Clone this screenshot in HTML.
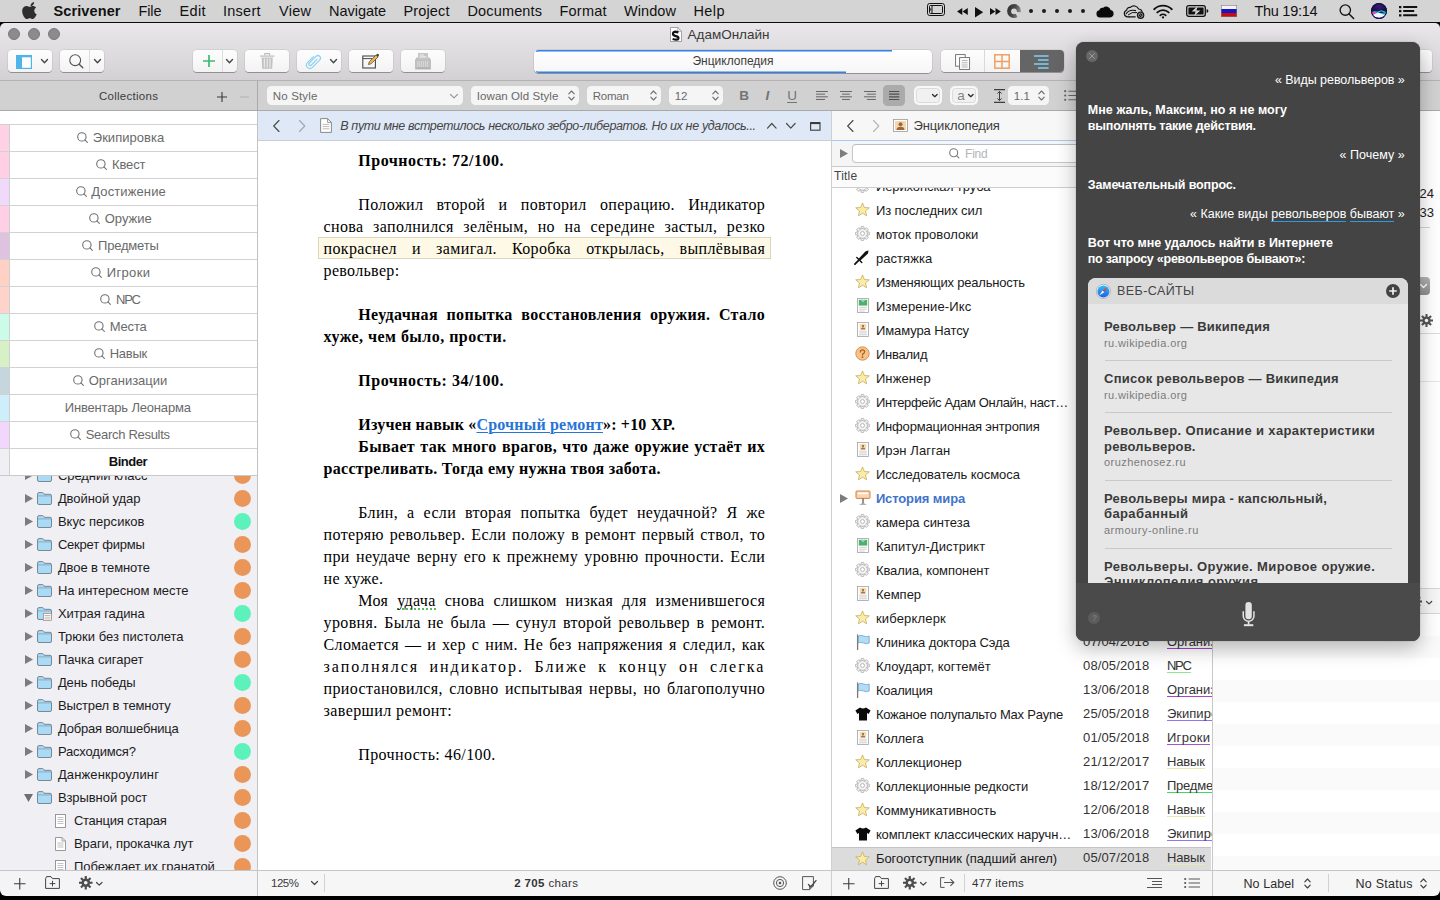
<!DOCTYPE html>
<html lang="ru"><head><meta charset="utf-8"><title>АдамОнлайн — Scrivener</title>
<style>
*{box-sizing:border-box;margin:0;padding:0}
html,body{width:1440px;height:900px;overflow:hidden;background:#000}
body{position:relative;font-family:"Liberation Sans","DejaVu Sans",sans-serif;font-size:13px;color:#222;-webkit-font-smoothing:antialiased}
.abs{position:absolute}
svg{position:absolute;overflow:visible}
/* menu bar */
#menubar{position:absolute;left:0;top:0;width:1440px;height:23px;background:#d4d4d4;border-bottom:1px solid #0c0c0c}
#menubar span{position:absolute;top:0;line-height:22px;font-size:14.5px;color:#111;white-space:nowrap}
/* window */
#win{position:absolute;left:0;top:0;width:1440px;height:900px}
#titlebar{position:absolute;left:0;top:23px;width:1440px;height:58px;border-radius:5px 5px 0 0;background:linear-gradient(#e9e7e9,#d3d1d3);border-bottom:1px solid #b4b2b4}
.tl{position:absolute;top:5px;width:12px;height:12px;border-radius:6px;background:#8b8a8c;border:0.5px solid #7a797b}
#title{position:absolute;left:688px;top:3px;font-size:13.5px;color:#3c3c3c;line-height:16px;white-space:nowrap}
.tb{position:absolute;top:50px;height:22px;background:linear-gradient(#fdfdfd,#f3f3f3);border-radius:4px;box-shadow:0 0 0 0.5px rgba(0,0,0,.12),0 1px 0.5px rgba(0,0,0,.28)}
.tb .div{position:absolute;top:0;width:1px;height:22px;background:#dcdcdc}
/* format bar */
#fmt{position:absolute;left:0;top:81px;width:1440px;height:30px;background:#d1d1d1;border-bottom:1px solid #a9a9a9}
.fc{position:absolute;top:5px;height:19px;background:#f5f5f5;border-radius:4.5px;font-size:12px;line-height:19px;color:#6b6b6b;padding-left:6px;white-space:nowrap}
/* sidebar */
#side{position:absolute;left:0;top:111px;width:258px;height:759px;background:#f0eff4;border-right:1px solid #c3c3c5;overflow:hidden}
.coll{position:absolute;left:0;width:257px;height:27px;border-top:1px solid #d2d2d2;background:#fff;text-align:center;font-size:13px;line-height:26px;color:#6c6c6c;padding-left:10px;white-space:nowrap}
.coll i{position:absolute;left:0;top:0;width:10px;height:100%;border-right:1px solid #cfcfcf}
.brow{position:absolute;left:0;width:257px;height:23px;font-size:13px;line-height:23px;color:#1d1d1d;white-space:nowrap}
.brow b{position:absolute;left:234px;top:3px;width:17px;height:17px;border-radius:9px}
.brow span{position:absolute;top:0}
/* status bars */
.status{position:absolute;top:870px;height:26px;background:#f4f3f6;border-top:1px solid #c6c6c8}
/* editor */
#edhead{position:absolute;left:258px;top:111px;width:573px;height:30px;background:#dfe8f6;border-bottom:1px solid #c9cdd4}
#editor{position:absolute;left:258px;top:141px;width:573px;height:729px;background:#fff;overflow:hidden;font-family:"Liberation Serif","DejaVu Serif",serif;font-size:16px;color:#000}
.ln{position:absolute;left:65.6px;width:441.6px;height:22px;line-height:22px;white-space:nowrap;text-align:justify;text-align-last:justify;letter-spacing:0.35px}
.ln.l{text-align:left;text-align-last:left}
.ln.in{left:100.3px;width:406.9px}
/* outliner */
#outl{position:absolute;left:831px;top:111px;width:381px;height:759px;background:#fff;border-left:1px solid #cfcfcf;overflow:hidden}
.orow{position:absolute;left:0;width:379px;height:24px;font-size:13px;line-height:24px;color:#1a1a1a;white-space:nowrap}
.orow span{position:absolute;top:0}
.orow u{text-decoration:none;border-bottom:1.5px solid #aaa;line-height:15px;display:inline-block;margin-top:4px}
/* inspector */
#insp{position:absolute;left:1212px;top:111px;width:228px;height:759px;background:#fff;border-left:1px solid #c8c8c8;overflow:hidden}
/* siri */
#siri{position:absolute;left:1076px;top:42px;width:344px;height:599px;border-radius:8px;background:#444;box-shadow:0 7px 20px rgba(0,0,0,.28),0 0 1px rgba(0,0,0,.55);overflow:hidden;color:#fff;font-size:12.5px}
#siri .q{position:absolute;right:16px;white-space:nowrap;line-height:16px}
#siri .a{position:absolute;left:12px;white-space:nowrap;line-height:16px;font-weight:bold}
#card{position:absolute;left:12px;top:236px;width:320px;height:305px;border-radius:8px 8px 0 0;background:#e7e7e7;overflow:hidden;color:#3b3b3b}
#card .h{position:absolute;left:0;top:0;width:320px;height:26px;background:#dbdbdb}
#card .t{position:absolute;left:16px;font-weight:bold;font-size:13px;line-height:16px;white-space:nowrap;color:#3a3a3a}
#card .u{position:absolute;left:16px;font-size:11px;line-height:14px;white-space:nowrap;color:#7c7c7c}
#card .s{position:absolute;left:16px;width:288px;height:1px;background:#c9c9c9}
#sbot{position:absolute;left:0;top:541px;width:344px;height:58px;background:#4a4a4a}
</style></head>
<body>
<div id="menubar"><svg style="left:22px;top:2px" width="15" height="18" viewBox="0 0 15 18" ><path d="M10.2 2.9 C10.9 2 11.3 0.9 11.2 0 C10.2 0.1 9.1 0.7 8.4 1.5 C7.8 2.2 7.3 3.3 7.4 4.3 C8.5 4.4 9.6 3.8 10.2 2.9 Z M13.9 13 C13.5 14 13.3 14.4 12.7 15.3 C12 16.5 10.9 17.9 9.6 17.9 C8.4 17.9 8.1 17.1 6.6 17.1 C5 17.1 4.7 17.9 3.5 17.9 C2.2 17.9 1.2 16.6 0.4 15.4 C-1.7 12.2 -1.9 8.400000000000001 -0.6 6.4 C0.3 5 1.7 4.2 3.1 4.2 C4.4 4.2 5.3 5 6.500000000000001 5 C7.600000000000001 5 8.3 4.2 10 4.2 C11.2 4.2 12.4 4.8 13.3 5.9 C10.4 7.500000000000001 10.9 11.7 13.9 13 Z" fill="#2e2e2e" transform="translate(1.5 0) scale(0.95)"/></svg><span class="abs" style="white-space:nowrap;top:3.00px;font-size:14.5px;line-height:16px;letter-spacing:0.111px;left:53.50px;color:#111;font-weight:bold;">Scrivener</span><span class="abs" style="white-space:nowrap;top:3.00px;font-size:14.5px;line-height:16px;letter-spacing:-0.125px;left:138.50px;color:#111;">File</span><span class="abs" style="white-space:nowrap;top:3.00px;font-size:14.5px;line-height:16px;letter-spacing:0.333px;left:179.50px;color:#111;">Edit</span><span class="abs" style="white-space:nowrap;top:3.00px;font-size:14.5px;line-height:16px;letter-spacing:0.247px;left:223.00px;color:#111;">Insert</span><span class="abs" style="white-space:nowrap;top:3.00px;font-size:14.5px;line-height:16px;letter-spacing:0.276px;left:279.00px;color:#111;">View</span><span class="abs" style="white-space:nowrap;top:3.00px;font-size:14.5px;line-height:16px;letter-spacing:-0.033px;left:329.00px;color:#111;">Navigate</span><span class="abs" style="white-space:nowrap;top:3.00px;font-size:14.5px;line-height:16px;letter-spacing:0.143px;left:403.50px;color:#111;">Project</span><span class="abs" style="white-space:nowrap;top:3.00px;font-size:14.5px;line-height:16px;letter-spacing:0.145px;left:467.50px;color:#111;">Documents</span><span class="abs" style="white-space:nowrap;top:3.00px;font-size:14.5px;line-height:16px;letter-spacing:0.216px;left:559.50px;color:#111;">Format</span><span class="abs" style="white-space:nowrap;top:3.00px;font-size:14.5px;line-height:16px;letter-spacing:0.084px;left:624.00px;color:#111;">Window</span><span class="abs" style="white-space:nowrap;top:3.00px;font-size:14.5px;line-height:16px;letter-spacing:0.391px;left:693.50px;color:#111;">Help</span><svg style="left:927px;top:3px" width="18" height="13" viewBox="0 0 18 13" ><rect x="0.5" y="0.5" width="17" height="12" rx="2.2" fill="none" stroke="#111" stroke-width="1"/><rect x="2.5" y="2.5" width="13" height="8" rx="1" fill="none" stroke="#111" stroke-width="1"/><path d="M5 2.5 V10.5" stroke="#111" stroke-width="1"/><path d="M3.7 5.4 V7.6" stroke="#111" stroke-width="0.9"/></svg><svg style="left:957.2px;top:8px" width="11" height="7" viewBox="0 0 11 7" ><path d="M5.3 0 V7 L0 3.5 Z M10.8 0 V7 L5.5 3.5 Z" fill="#111"/></svg><svg style="left:975px;top:6.5px" width="8.2" height="10.5" viewBox="0 0 8.2 10.5" ><path d="M0 0 L8.2 5.25 L0 10.5 Z" fill="#111"/></svg><svg style="left:990px;top:8px" width="11" height="7" viewBox="0 0 11 7" ><path d="M0 0 L5.3 3.5 L0 7 Z M5.5 0 L10.8 3.5 L5.5 7 Z" fill="#111"/></svg><svg style="left:1007px;top:4px" width="14" height="14" viewBox="0 0 14 14" ><defs><linearGradient id="pm" x1="0" y1="0" x2="1" y2="0.3"><stop offset="0" stop-color="#2a2a2a"/><stop offset="0.6" stop-color="#4a4a4a"/><stop offset="1" stop-color="#8a8a8a"/></linearGradient></defs><circle cx="7" cy="7" r="6.9" fill="url(#pm)"/><circle cx="7" cy="7.3" r="2.9" fill="#d4d4d4"/><path d="M7.6 7.6 L15 8.6 L11.6 15 Z" fill="#d4d4d4"/></svg><i class="abs" style="left:1029.0px;top:9px;width:4px;height:4px;border-radius:2px;background:#1a1a1a"></i><i class="abs" style="left:1042.0px;top:9px;width:4px;height:4px;border-radius:2px;background:#1a1a1a"></i><i class="abs" style="left:1055.0px;top:9px;width:4px;height:4px;border-radius:2px;background:#1a1a1a"></i><i class="abs" style="left:1068.0px;top:9px;width:4px;height:4px;border-radius:2px;background:#1a1a1a"></i><i class="abs" style="left:1081.0px;top:9px;width:4px;height:4px;border-radius:2px;background:#1a1a1a"></i><svg style="left:1096px;top:4.6px" width="18" height="12.4" viewBox="0 0 18 12.4" ><path d="M4 12.4 A3.6 3.6 0 0 1 3.2 5.3 A3.3 3.3 0 0 1 7.2 2.8 A4.4 4.4 0 0 1 14.6 4.9 A3.8 3.8 0 0 1 14.2 12.4 Z" fill="#0a0a0a"/></svg><svg style="left:1123px;top:3.6px" width="23" height="15" viewBox="0 0 23 15" ><path d="M6.2 12.8 H4.6 A3.4 3.4 0 0 1 3.6 6.2 A3.2 3.2 0 0 1 7.4 3.4 A5 5 0 0 1 15.6 5 A3.6 3.6 0 0 1 19 7.4" fill="none" stroke="#111" stroke-width="1.2" stroke-linecap="round"/><path d="M6.2 12.8 H12.2" stroke="#111" stroke-width="1.2" stroke-linecap="round"/><path d="M3 10 Q6 5.2 13 6.6" fill="none" stroke="#111" stroke-width="1.1"/><path d="M5 11 Q9 7.4 14 8.6" fill="none" stroke="#111" stroke-width="1"/><circle cx="17.6" cy="11.2" r="3.7" fill="#111"/><circle cx="17.6" cy="11.2" r="2.2" fill="none" stroke="#bdbdbd" stroke-width="0.7"/><path d="M16.4 10 L18.8 12.4" stroke="#bdbdbd" stroke-width="0.8"/></svg><svg style="left:1152.5px;top:3.5px" width="20" height="14.5" viewBox="0 0 20 14.5" ><path d="M1.2 5.2 A12.6 12.6 0 0 1 18.8 5.2" fill="none" stroke="#111" stroke-width="1.9" stroke-linecap="round"/><path d="M4.3 8.4 A8.2 8.2 0 0 1 15.7 8.4" fill="none" stroke="#111" stroke-width="1.9" stroke-linecap="round"/><path d="M7.3 11.4 A3.9 3.9 0 0 1 12.7 11.4" fill="none" stroke="#111" stroke-width="1.8" stroke-linecap="round"/><circle cx="10" cy="13.4" r="1.1" fill="#111"/></svg><svg style="left:1186px;top:5px" width="23" height="12" viewBox="0 0 23 12" ><rect x="0.7" y="0.7" width="18.6" height="10.6" rx="2" fill="none" stroke="#111" stroke-width="1.3"/><path d="M20.6 4 Q22.4 4.6 22.4 6 Q22.4 7.4 20.6 8 Z" fill="#111"/><rect x="2.4" y="2.4" width="15.2" height="7.2" rx="0.6" fill="#111"/><path d="M11.8 1 L5.6 6.6 H9.6 L8.2 11 L14.4 5.4 H10.4 Z" fill="#d4d4d4"/></svg><svg style="left:1221px;top:5px" width="16" height="12" viewBox="0 0 16 12" ><rect x="0" y="0" width="16" height="4" fill="#f4f4f4"/><rect x="0" y="4" width="16" height="4" fill="#1414c8"/><rect x="0" y="8" width="16" height="4" fill="#cc0a0a"/><rect x="0.3" y="0.3" width="15.4" height="11.4" fill="none" stroke="#777" stroke-width="0.6"/></svg><span class="abs" style="white-space:nowrap;top:3.00px;font-size:14.5px;line-height:16px;letter-spacing:-0.289px;left:1254.50px;color:#111;">Thu 19:14</span><svg style="left:1339px;top:4px" width="16" height="16" viewBox="0 0 16 16" ><circle cx="6.3" cy="6.1" r="5.2" fill="none" stroke="#151515" stroke-width="1.35"/><path d="M10.1 9.9 L14.6 14.5" stroke="#151515" stroke-width="1.5" stroke-linecap="round"/></svg><svg style="left:1371px;top:2.8px" width="16" height="16" viewBox="0 0 16 16" ><defs><radialGradient id="sg" cx="0.5" cy="0.2" r="0.9"><stop offset="0" stop-color="#3a1a7a"/><stop offset="0.45" stop-color="#1a1248"/><stop offset="1" stop-color="#0a0a24"/></radialGradient><clipPath id="sc"><circle cx="8" cy="8" r="8"/></clipPath></defs><circle cx="8" cy="8" r="8" fill="url(#sg)"/><g clip-path="url(#sc)"><path d="M-1 10.5 Q3 6.5 7 9 T17 7.5 V13 H-1 Z" fill="#1fa3f0" opacity="0.95"/><path d="M-1 10 Q2 7.6 4.6 9.6 L3 12 Z" fill="#ff3fb0"/><path d="M1.5 12.5 Q6 8.6 10 10.4 T16 11.5 Q12 15.5 7 14.8 Q3 14.6 1.5 12.5 Z" fill="#f3f6ff"/><path d="M6 9.4 Q10 6.4 14.6 9.2" fill="none" stroke="#35e0d0" stroke-width="1"/><path d="M3 14 Q8 17 13.4 13.6" fill="none" stroke="#5a48e8" stroke-width="1.4"/></g><circle cx="8" cy="8" r="7.5" fill="none" stroke="#100c30" stroke-width="1"/></svg><svg style="left:1398.8px;top:5.8px" width="19" height="11" viewBox="0 0 19 11" ><path d="M0 0 H2.4 V2.2 H0 Z M0 4 H2.4 V6.2 H0 Z M0 8.2 H2.4 V10.4 H0 Z" fill="#111"/><path d="M4.2 1.1 H18.2 M4.2 5.1 H15.2 M4.2 9.3 H18.2" stroke="#111" stroke-width="2"/></svg></div>
<div id="win">
<div id="titlebar"><i class="tl" style="left:8px"></i><i class="tl" style="left:28px"></i><i class="tl" style="left:48px"></i><svg style="left:670px;top:4px" width="12" height="15" viewBox="0 0 12 15" ><path d="M0.5 0.5 H7.8 L11.5 4.2 V14.5 H0.5 Z" fill="#fff" stroke="#8e8e8e" stroke-width="0.8"/><path d="M7.8 0.5 V4.2 H11.5" fill="none" stroke="#8e8e8e" stroke-width="0.7"/><path d="M8.4 5.4 Q3 3.6 3 6.8 Q3 8.6 6 9.2 Q8.6 9.8 8.4 11.4 Q8 13.4 2.6 12" fill="none" stroke="#111" stroke-width="2.3"/></svg><span class="abs" style="white-space:nowrap;top:3.50px;font-size:13.5px;line-height:16px;letter-spacing:-0.002px;left:687.50px;color:#3a3a3a;">АдамОнлайн</span></div>
<div class="tb" style="left:8px;width:44px"><svg style="left:8px;top:4.5px" width="16" height="14" viewBox="0 0 16 14" ><rect x="0.6" y="0.6" width="14.8" height="12.8" fill="#fff" stroke="#4fb4ea" stroke-width="1.2"/><rect x="0.6" y="0.6" width="14.8" height="1.7" fill="#4fb4ea"/><rect x="0.6" y="0.6" width="5.4" height="12.8" fill="#4fb4ea"/></svg><svg style="left:33px;top:8.6px" width="7" height="4.2" viewBox="0 0 7 4.2" ><path d="M0.5 0.5 L3.5 3.7 L6.5 0.5" fill="none" stroke="#454545" stroke-width="1.35" stroke-linecap="round" stroke-linejoin="round"/></svg></div><div class="tb" style="left:60px;width:44px"><i class="div" style="left:29px"></i><svg style="left:9px;top:3.5px" width="15" height="15" viewBox="0 0 15 15" ><circle cx="6.2" cy="6.2" r="5.4" fill="none" stroke="#555" stroke-width="1.1"/><path d="M10.2 10.2 L13.8 13.8" stroke="#555" stroke-width="1.4" stroke-linecap="round"/></svg><svg style="left:34px;top:8.6px" width="7" height="4.2" viewBox="0 0 7 4.2" ><path d="M0.5 0.5 L3.5 3.7 L6.5 0.5" fill="none" stroke="#454545" stroke-width="1.35" stroke-linecap="round" stroke-linejoin="round"/></svg></div><div class="tb" style="left:193px;width:44px"><i class="div" style="left:29px"></i><svg style="left:10px;top:5px" width="12" height="12" viewBox="0 0 12 12" ><path d="M6 0 V12 M0 6 H12" stroke="#3cba73" stroke-width="1.7"/></svg><svg style="left:33px;top:8.6px" width="7" height="4.2" viewBox="0 0 7 4.2" ><path d="M0.5 0.5 L3.5 3.7 L6.5 0.5" fill="none" stroke="#454545" stroke-width="1.35" stroke-linecap="round" stroke-linejoin="round"/></svg></div><div class="tb" style="left:245px;width:44px"><svg style="left:15.3px;top:3.2px" width="14.4" height="16" viewBox="0 0 14.4 16" ><path d="M0 3.1 H14.4" stroke="#bdbdbd" stroke-width="1.2"/><path d="M4.8 2.8 V0.6 H9.6 V2.8" fill="none" stroke="#bdbdbd" stroke-width="1.1"/><path d="M1.6 4.4 H12.8 L12.2 15.8 H2.2 Z" fill="#c3c3c3"/><path d="M4.4 5.6 V14.6 M7.2 5.6 V14.6 M10 5.6 V14.6" stroke="#ebebeb" stroke-width="1.1"/></svg></div><div class="tb" style="left:297px;width:44px"><svg style="left:8px;top:3.5px" width="16" height="16" viewBox="0 0 16 16" ><path d="M12.2 5.2 L6.4 11 Q5.2 12.2 4.2 11.2 Q3.2 10.2 4.4 9 L11 2.4 Q13 0.6 14.8 2.4 Q16.4 4.2 14.6 6.2 L7.4 13.4 Q4.8 15.8 2.4 13.4 Q0.2 11 2.6 8.4 L8.6 2.6" fill="none" stroke="#8fd0f2" stroke-width="1.2" stroke-linecap="round"/></svg><svg style="left:33px;top:8.6px" width="7" height="4.2" viewBox="0 0 7 4.2" ><path d="M0.5 0.5 L3.5 3.7 L6.5 0.5" fill="none" stroke="#454545" stroke-width="1.35" stroke-linecap="round" stroke-linejoin="round"/></svg></div><div class="tb" style="left:349px;width:44px"><svg style="left:13px;top:3px" width="18" height="16" viewBox="0 0 18 16" ><rect x="0.8" y="3" width="12.6" height="12" fill="none" stroke="#4a4a4a" stroke-width="1.1"/><path d="M0.8 5.6 H10" stroke="#4a4a4a" stroke-width="1"/><path d="M6.4 11.6 L7.2 8.8 L14 2 L16 4 L9.2 10.8 Z" fill="#f3b04a" stroke="#4a4a4a" stroke-width="0.7"/><path d="M14 2 L15 1 Q15.8 0.4 16.6 1.2 Q17.4 2 16.8 2.8 L16 4 Z" fill="#444"/></svg></div><div class="tb" style="left:401px;width:44px"><svg style="left:14px;top:2.7px" width="16" height="16.4" viewBox="0 0 16 16.4" ><rect x="3" y="0" width="10" height="6.6" fill="#c6c6c6"/><path d="M4.6 2 H9 M4.6 4 H11.4" stroke="#f3f3f3" stroke-width="0.9"/><path d="M1.4 4.6 H14.6 L16 7 V16.4 H0 V7 Z" fill="#bfbfbf"/><rect x="3" y="3.6" width="10" height="3" fill="#c6c6c6"/><path d="M4.6 4 H11.4" stroke="#f3f3f3" stroke-width="0.9"/><path d="M2.2 9 H14 M2.2 11 H14 M2.2 13 H14" stroke="#f0f0f0" stroke-width="1" stroke-dasharray="1.1 0.85"/><path d="M1.6 15.2 H14.4" stroke="#a9a9a9" stroke-width="1"/></svg></div><div class="abs" style="left:534px;top:49.5px;width:398px;height:23px;border-radius:4.5px;background:linear-gradient(#fff,#f6f6f6);box-shadow:0 0 0 0.5px rgba(0,0,0,.14),0 1px 0.5px rgba(0,0,0,.25)"></div><svg style="left:534px;top:49.5px" width="398" height="23" viewBox="0 0 398 23" ><path d="M2.2 1.4 Q3.4 0.75 5 0.75 H358" fill="none" stroke="#2f80ea" stroke-width="1.5"/><path d="M2.2 21.6 Q3.4 22.25 5 22.25 H312" fill="none" stroke="#2f80ea" stroke-width="1.5"/></svg><span class="abs" style="white-space:nowrap;top:53.00px;font-size:12px;line-height:16px;letter-spacing:-0.013px;left:692.50px;color:#3d3d3d;">Энциклопедия</span><div class="abs" style="left:941px;top:50px;width:123px;height:22px;border-radius:4px;background:linear-gradient(#fdfdfd,#f3f3f3);box-shadow:0 0 0 0.5px rgba(0,0,0,.12),0 1px 0.5px rgba(0,0,0,.28);overflow:hidden"><i class="abs" style="left:43px;top:0;width:1px;height:22px;background:#d9d9d9"></i><i class="abs" style="left:79px;top:0;width:44px;height:22px;background:#656565"></i><svg style="left:14px;top:3.5px" width="16" height="16" viewBox="0 0 16 16" ><rect x="0.6" y="0.6" width="9.6" height="11.6" fill="#fff" stroke="#6a6a6a" stroke-width="0.9"/><rect x="4.6" y="3.6" width="10" height="11.8" fill="#fff" stroke="#6a6a6a" stroke-width="0.9"/><path d="M6.6 6.6 H12.6 M6.6 8.8 H12.6 M6.6 11 H12.6 M6.6 13 H12.6" stroke="#9a9a9a" stroke-width="0.8"/></svg><svg style="left:53px;top:4px" width="16" height="15" viewBox="0 0 16 15" ><rect x="0.8" y="0.8" width="14.4" height="13.4" fill="none" stroke="#f0a060" stroke-width="1.5"/><path d="M8 0.8 V14.2 M0.8 7.5 H15.2" stroke="#f0a060" stroke-width="1.5"/></svg><svg style="left:93px;top:4.5px" width="15" height="14" viewBox="0 0 15 14" ><path d="M0 1 H14.6 M4 5 H14.6 M0 9 H14.6 M4 13 H14.6" stroke="#7fd0f5" stroke-width="1.7"/></svg></div><div class="tb" style="left:1388px;width:44px"></div>
<div id="fmt"><i class="abs" style="left:257px;top:0;width:1px;height:30px;background:#a9a9a9"></i><span class="abs" style="white-space:nowrap;top:7.00px;font-size:11.5px;line-height:16px;letter-spacing:0.275px;left:98.90px;color:#3c3c3c;">Collections</span><svg style="left:216.5px;top:10.5px" width="10" height="10" viewBox="0 0 10 10" ><path d="M5.0 0 V10 M0 5.0 H10" stroke="#3a3a3a" stroke-width="1.1" fill="none"/></svg><svg style="left:240px;top:15px" width="9" height="2" viewBox="0 0 9 2" ><path d="M0 1 H9" stroke="#b4b4b4" stroke-width="1.1"/></svg><div class="fc" style="left:267px;width:196px"><span class="abs" style="white-space:nowrap;top:2.00px;font-size:11.5px;line-height:16px;letter-spacing:0.147px;left:5.80px;color:#686868;">No Style</span><svg style="left:183px;top:7.6px" width="8" height="4.4" viewBox="0 0 8 4.4" ><path d="M0.5 0.5 L4.0 3.9000000000000004 L7.5 0.5" fill="none" stroke="#9a9a9a" stroke-width="1.2" stroke-linecap="round" stroke-linejoin="round"/></svg></div><div class="fc" style="left:471px;width:108px"><span class="abs" style="white-space:nowrap;top:2.00px;font-size:11.5px;line-height:16px;letter-spacing:0.068px;left:5.80px;color:#686868;">Iowan Old Style</span><svg style="left:97px;top:4px" width="7" height="11" viewBox="0 0 7 11" ><path d="M0.8 3.8 L3.5 1 L6.2 3.8 M0.8 7.2 L3.5 10 L6.2 7.2" fill="none" stroke="#707070" stroke-width="1.15" stroke-linecap="round" stroke-linejoin="round"/></svg></div><div class="fc" style="left:587px;width:74px"><span class="abs" style="white-space:nowrap;top:2.00px;font-size:11.5px;line-height:16px;letter-spacing:-0.27px;left:5.80px;color:#686868;">Roman</span><svg style="left:63px;top:4px" width="7" height="11" viewBox="0 0 7 11" ><path d="M0.8 3.8 L3.5 1 L6.2 3.8 M0.8 7.2 L3.5 10 L6.2 7.2" fill="none" stroke="#707070" stroke-width="1.15" stroke-linecap="round" stroke-linejoin="round"/></svg></div><div class="fc" style="left:669px;width:54px"><span class="abs" style="white-space:nowrap;top:2.00px;font-size:11.5px;line-height:16px;letter-spacing:-0.297px;left:5.80px;color:#686868;">12</span><svg style="left:43px;top:4px" width="7" height="11" viewBox="0 0 7 11" ><path d="M0.8 3.8 L3.5 1 L6.2 3.8 M0.8 7.2 L3.5 10 L6.2 7.2" fill="none" stroke="#707070" stroke-width="1.15" stroke-linecap="round" stroke-linejoin="round"/></svg></div><span class="abs" style="white-space:nowrap;top:6.50px;font-size:13.5px;line-height:16px;left:739.20px;color:#747474;font-weight:bold;">B</span><span class="abs" style="white-space:nowrap;top:6.50px;font-size:13.5px;line-height:16px;left:765.60px;color:#747474;font-weight:bold;font-style:italic;">I</span><span class="abs" style="white-space:nowrap;top:6.50px;font-size:13.5px;line-height:16px;left:787.20px;color:#747474;background:linear-gradient(#747474,#747474) 0 14.6px/100% 1.1px no-repeat;">U</span><svg style="left:816px;top:10px" width="12" height="9.5" viewBox="0 0 12 9.5" ><path d="M0 0.5 H11.9 M0 3.15 H9 M0 5.8 H11.9 M0 8.45 H9" stroke="#676767" stroke-width="1"/></svg><svg style="left:840px;top:10px" width="12" height="9.5" viewBox="0 0 12 9.5" ><path d="M0 0.5 H11.9 M2 3.15 H9.9 M0 5.8 H11.9 M2 8.45 H9.9" stroke="#676767" stroke-width="1"/></svg><svg style="left:864px;top:10px" width="12" height="9.5" viewBox="0 0 12 9.5" ><path d="M0 0.5 H11.9 M2.9 3.15 H11.9 M0 5.8 H11.9 M2.9 8.45 H11.9" stroke="#676767" stroke-width="1"/></svg><i class="abs" style="left:883px;top:4.2px;width:21.8px;height:20.4px;border-radius:4.5px;background:#ababab"></i><svg style="left:888.7px;top:10px" width="12" height="9.5" viewBox="0 0 12 9.5" ><path d="M0 0.5 H10.3 M0 3.15 H10.3 M0 5.8 H10.3 M0 8.45 H10.3" stroke="#505050" stroke-width="1.15"/></svg><div class="abs" style="left:914px;top:5px;width:27.8px;height:18.6px;border-radius:5px;background:#f8f8f8"><i class="abs" style="left:2px;top:2px;right:2px;bottom:2px;border-radius:3.5px;border:1px solid #dadada;background:#f1f1f1"></i><svg style="left:17.7px;top:7.6px" width="5.6" height="3.2" viewBox="0 0 5.6 3.2" ><path d="M0.5 0.5 L2.8 2.7 L5.1 0.5" fill="none" stroke="#2a2a2a" stroke-width="1.3" stroke-linecap="round" stroke-linejoin="round"/></svg></div><div class="abs" style="left:950px;top:5px;width:27.8px;height:18.6px;border-radius:5px;background:#f8f8f8"><i class="abs" style="left:2px;top:2px;right:2px;bottom:2px;border-radius:3.5px;border:1px solid #dadada;background:#f1f1f1"></i><span class="abs" style="white-space:nowrap;top:1.50px;font-size:13.5px;line-height:16px;left:7.30px;color:#858585;">a</span><svg style="left:17.9px;top:7.6px" width="5.6" height="3.2" viewBox="0 0 5.6 3.2" ><path d="M0.5 0.5 L2.8 2.7 L5.1 0.5" fill="none" stroke="#2a2a2a" stroke-width="1.3" stroke-linecap="round" stroke-linejoin="round"/></svg></div><svg style="left:994px;top:8px" width="11" height="14" viewBox="0 0 11 14" ><path d="M0 0.6 H11 M0 13.4 H11" stroke="#3d3d3d" stroke-width="1.1"/><path d="M5.5 2.6 V11.4 M3.4 4.6 L5.5 2.4 L7.6 4.6 M3.4 9.4 L5.5 11.6 L7.6 9.4" fill="none" stroke="#3d3d3d" stroke-width="1"/></svg><div class="fc" style="left:1008px;width:41px"><span class="abs" style="white-space:nowrap;top:2.00px;font-size:11.5px;line-height:16px;letter-spacing:0.0px;left:5.80px;color:#686868;">1.1</span><svg style="left:30px;top:4px" width="7" height="11" viewBox="0 0 7 11" ><path d="M0.8 3.8 L3.5 1 L6.2 3.8 M0.8 7.2 L3.5 10 L6.2 7.2" fill="none" stroke="#707070" stroke-width="1.15" stroke-linecap="round" stroke-linejoin="round"/></svg></div><svg style="left:1064px;top:9px" width="14" height="11" viewBox="0 0 14 11" ><circle cx="1.2" cy="1.2" r="1.1" fill="#666"/><circle cx="1.2" cy="5.5" r="1.1" fill="#666"/><circle cx="1.2" cy="9.8" r="1.1" fill="#666"/><path d="M4.4 1.2 H14 M4.4 5.5 H14 M4.4 9.8 H14" stroke="#666" stroke-width="1.1"/></svg></div>
<div id="side"><div class="brow" style="top:353px"><b style="background:#e99658"></b><svg style="left:25px;top:7px" width="8" height="9" viewBox="0 0 8 9" ><path d="M0 0 L8 4.5 L0 9 Z" fill="#7c7c7c"/></svg><svg style="left:37px;top:5px" width="15" height="13" viewBox="0 0 15 13" ><path d="M0.5 2.2 Q0.5 0.6 2 0.6 H5.4 Q6.3 0.6 6.8 1.5 L7.2 2.3 H13 Q14.5 2.3 14.5 3.8 V11 Q14.5 12.5 13 12.5 H2 Q0.5 12.5 0.5 11 Z" fill="#a9dbf7" stroke="#6f7d8a" stroke-width="0.9"/><path d="M0.9 3.9 H14.1" stroke="#7f93a3" stroke-width="0.7"/></svg><span class="abs" style="white-space:nowrap;top:0.00px;font-size:13px;line-height:23px;letter-spacing:-0.044px;left:57.90px;color:#1c1c1c;">Средний класс</span></div><div class="brow" style="top:376px"><b style="background:#e99658"></b><svg style="left:25px;top:7px" width="8" height="9" viewBox="0 0 8 9" ><path d="M0 0 L8 4.5 L0 9 Z" fill="#7c7c7c"/></svg><svg style="left:37px;top:5px" width="15" height="13" viewBox="0 0 15 13" ><path d="M0.5 2.2 Q0.5 0.6 2 0.6 H5.4 Q6.3 0.6 6.8 1.5 L7.2 2.3 H13 Q14.5 2.3 14.5 3.8 V11 Q14.5 12.5 13 12.5 H2 Q0.5 12.5 0.5 11 Z" fill="#a9dbf7" stroke="#6f7d8a" stroke-width="0.9"/><path d="M0.9 3.9 H14.1" stroke="#7f93a3" stroke-width="0.7"/></svg><span class="abs" style="white-space:nowrap;top:0.00px;font-size:13px;line-height:23px;letter-spacing:-0.078px;left:57.90px;color:#1c1c1c;">Двойной удар</span></div><div class="brow" style="top:399px"><b style="background:#5df2bb"></b><svg style="left:25px;top:7px" width="8" height="9" viewBox="0 0 8 9" ><path d="M0 0 L8 4.5 L0 9 Z" fill="#7c7c7c"/></svg><svg style="left:37px;top:5px" width="15" height="13" viewBox="0 0 15 13" ><path d="M0.5 2.2 Q0.5 0.6 2 0.6 H5.4 Q6.3 0.6 6.8 1.5 L7.2 2.3 H13 Q14.5 2.3 14.5 3.8 V11 Q14.5 12.5 13 12.5 H2 Q0.5 12.5 0.5 11 Z" fill="#a9dbf7" stroke="#6f7d8a" stroke-width="0.9"/><path d="M0.9 3.9 H14.1" stroke="#7f93a3" stroke-width="0.7"/></svg><span class="abs" style="white-space:nowrap;top:0.00px;font-size:13px;line-height:23px;letter-spacing:0.033px;left:57.90px;color:#1c1c1c;">Вкус персиков</span></div><div class="brow" style="top:422px"><b style="background:#e99658"></b><svg style="left:25px;top:7px" width="8" height="9" viewBox="0 0 8 9" ><path d="M0 0 L8 4.5 L0 9 Z" fill="#7c7c7c"/></svg><svg style="left:37px;top:5px" width="15" height="13" viewBox="0 0 15 13" ><path d="M0.5 2.2 Q0.5 0.6 2 0.6 H5.4 Q6.3 0.6 6.8 1.5 L7.2 2.3 H13 Q14.5 2.3 14.5 3.8 V11 Q14.5 12.5 13 12.5 H2 Q0.5 12.5 0.5 11 Z" fill="#a9dbf7" stroke="#6f7d8a" stroke-width="0.9"/><path d="M0.9 3.9 H14.1" stroke="#7f93a3" stroke-width="0.7"/></svg><span class="abs" style="white-space:nowrap;top:0.00px;font-size:13px;line-height:23px;letter-spacing:-0.216px;left:57.90px;color:#1c1c1c;">Секрет фирмы</span></div><div class="brow" style="top:445px"><b style="background:#e99658"></b><svg style="left:25px;top:7px" width="8" height="9" viewBox="0 0 8 9" ><path d="M0 0 L8 4.5 L0 9 Z" fill="#7c7c7c"/></svg><svg style="left:37px;top:5px" width="15" height="13" viewBox="0 0 15 13" ><path d="M0.5 2.2 Q0.5 0.6 2 0.6 H5.4 Q6.3 0.6 6.8 1.5 L7.2 2.3 H13 Q14.5 2.3 14.5 3.8 V11 Q14.5 12.5 13 12.5 H2 Q0.5 12.5 0.5 11 Z" fill="#a9dbf7" stroke="#6f7d8a" stroke-width="0.9"/><path d="M0.9 3.9 H14.1" stroke="#7f93a3" stroke-width="0.7"/></svg><span class="abs" style="white-space:nowrap;top:0.00px;font-size:13px;line-height:23px;letter-spacing:-0.1px;left:57.90px;color:#1c1c1c;">Двое в темноте</span></div><div class="brow" style="top:468px"><b style="background:#e99658"></b><svg style="left:25px;top:7px" width="8" height="9" viewBox="0 0 8 9" ><path d="M0 0 L8 4.5 L0 9 Z" fill="#7c7c7c"/></svg><svg style="left:37px;top:5px" width="15" height="13" viewBox="0 0 15 13" ><path d="M0.5 2.2 Q0.5 0.6 2 0.6 H5.4 Q6.3 0.6 6.8 1.5 L7.2 2.3 H13 Q14.5 2.3 14.5 3.8 V11 Q14.5 12.5 13 12.5 H2 Q0.5 12.5 0.5 11 Z" fill="#a9dbf7" stroke="#6f7d8a" stroke-width="0.9"/><path d="M0.9 3.9 H14.1" stroke="#7f93a3" stroke-width="0.7"/></svg><span class="abs" style="white-space:nowrap;top:0.00px;font-size:13px;line-height:23px;letter-spacing:-0.041px;left:57.90px;color:#1c1c1c;">На интересном месте</span></div><div class="brow" style="top:491px"><b style="background:#5df2bb"></b><svg style="left:25px;top:7px" width="8" height="9" viewBox="0 0 8 9" ><path d="M0 0 L8 4.5 L0 9 Z" fill="#7c7c7c"/></svg><svg style="left:37px;top:5px" width="15" height="13" viewBox="0 0 15 13" ><path d="M0.5 2.2 Q0.5 0.6 2 0.6 H5.4 Q6.3 0.6 6.8 1.5 L7.2 2.3 H13 Q14.5 2.3 14.5 3.8 V11 Q14.5 12.5 13 12.5 H2 Q0.5 12.5 0.5 11 Z" fill="#a9dbf7" stroke="#6f7d8a" stroke-width="0.9"/><path d="M0.9 3.9 H14.1" stroke="#7f93a3" stroke-width="0.7"/></svg><svg style="left:43px;top:11px" width="9" height="8" viewBox="0 0 9 8" ><rect x="0.4" y="0.4" width="8.2" height="7.2" fill="#fff" stroke="#8a8a8a" stroke-width="0.7"/><path d="M1.5 2.5 H7.5" stroke="#f0a07a" stroke-width="0.9"/><path d="M1.5 4.2 H7.5" stroke="#9ac7ee" stroke-width="0.9"/><path d="M1.5 5.9 H7.5" stroke="#f0a07a" stroke-width="0.9"/></svg><span class="abs" style="white-space:nowrap;top:0.00px;font-size:13px;line-height:23px;letter-spacing:-0.096px;left:57.90px;color:#1c1c1c;">Хитрая гадина</span></div><div class="brow" style="top:514px"><b style="background:#e99658"></b><svg style="left:25px;top:7px" width="8" height="9" viewBox="0 0 8 9" ><path d="M0 0 L8 4.5 L0 9 Z" fill="#7c7c7c"/></svg><svg style="left:37px;top:5px" width="15" height="13" viewBox="0 0 15 13" ><path d="M0.5 2.2 Q0.5 0.6 2 0.6 H5.4 Q6.3 0.6 6.8 1.5 L7.2 2.3 H13 Q14.5 2.3 14.5 3.8 V11 Q14.5 12.5 13 12.5 H2 Q0.5 12.5 0.5 11 Z" fill="#a9dbf7" stroke="#6f7d8a" stroke-width="0.9"/><path d="M0.9 3.9 H14.1" stroke="#7f93a3" stroke-width="0.7"/></svg><span class="abs" style="white-space:nowrap;top:0.00px;font-size:13px;line-height:23px;letter-spacing:0.009px;left:57.90px;color:#1c1c1c;">Трюки без пистолета</span></div><div class="brow" style="top:537px"><b style="background:#e99658"></b><svg style="left:25px;top:7px" width="8" height="9" viewBox="0 0 8 9" ><path d="M0 0 L8 4.5 L0 9 Z" fill="#7c7c7c"/></svg><svg style="left:37px;top:5px" width="15" height="13" viewBox="0 0 15 13" ><path d="M0.5 2.2 Q0.5 0.6 2 0.6 H5.4 Q6.3 0.6 6.8 1.5 L7.2 2.3 H13 Q14.5 2.3 14.5 3.8 V11 Q14.5 12.5 13 12.5 H2 Q0.5 12.5 0.5 11 Z" fill="#a9dbf7" stroke="#6f7d8a" stroke-width="0.9"/><path d="M0.9 3.9 H14.1" stroke="#7f93a3" stroke-width="0.7"/></svg><span class="abs" style="white-space:nowrap;top:0.00px;font-size:13px;line-height:23px;letter-spacing:0.024px;left:57.90px;color:#1c1c1c;">Пачка сигарет</span></div><div class="brow" style="top:560px"><b style="background:#5df2bb"></b><svg style="left:25px;top:7px" width="8" height="9" viewBox="0 0 8 9" ><path d="M0 0 L8 4.5 L0 9 Z" fill="#7c7c7c"/></svg><svg style="left:37px;top:5px" width="15" height="13" viewBox="0 0 15 13" ><path d="M0.5 2.2 Q0.5 0.6 2 0.6 H5.4 Q6.3 0.6 6.8 1.5 L7.2 2.3 H13 Q14.5 2.3 14.5 3.8 V11 Q14.5 12.5 13 12.5 H2 Q0.5 12.5 0.5 11 Z" fill="#a9dbf7" stroke="#6f7d8a" stroke-width="0.9"/><path d="M0.9 3.9 H14.1" stroke="#7f93a3" stroke-width="0.7"/></svg><span class="abs" style="white-space:nowrap;top:0.00px;font-size:13px;line-height:23px;letter-spacing:-0.135px;left:57.90px;color:#1c1c1c;">День победы</span></div><div class="brow" style="top:583px"><b style="background:#e99658"></b><svg style="left:25px;top:7px" width="8" height="9" viewBox="0 0 8 9" ><path d="M0 0 L8 4.5 L0 9 Z" fill="#7c7c7c"/></svg><svg style="left:37px;top:5px" width="15" height="13" viewBox="0 0 15 13" ><path d="M0.5 2.2 Q0.5 0.6 2 0.6 H5.4 Q6.3 0.6 6.8 1.5 L7.2 2.3 H13 Q14.5 2.3 14.5 3.8 V11 Q14.5 12.5 13 12.5 H2 Q0.5 12.5 0.5 11 Z" fill="#a9dbf7" stroke="#6f7d8a" stroke-width="0.9"/><path d="M0.9 3.9 H14.1" stroke="#7f93a3" stroke-width="0.7"/></svg><span class="abs" style="white-space:nowrap;top:0.00px;font-size:13px;line-height:23px;letter-spacing:-0.133px;left:57.90px;color:#1c1c1c;">Выстрел в темноту</span></div><div class="brow" style="top:606px"><b style="background:#e99658"></b><svg style="left:25px;top:7px" width="8" height="9" viewBox="0 0 8 9" ><path d="M0 0 L8 4.5 L0 9 Z" fill="#7c7c7c"/></svg><svg style="left:37px;top:5px" width="15" height="13" viewBox="0 0 15 13" ><path d="M0.5 2.2 Q0.5 0.6 2 0.6 H5.4 Q6.3 0.6 6.8 1.5 L7.2 2.3 H13 Q14.5 2.3 14.5 3.8 V11 Q14.5 12.5 13 12.5 H2 Q0.5 12.5 0.5 11 Z" fill="#a9dbf7" stroke="#6f7d8a" stroke-width="0.9"/><path d="M0.9 3.9 H14.1" stroke="#7f93a3" stroke-width="0.7"/></svg><span class="abs" style="white-space:nowrap;top:0.00px;font-size:13px;line-height:23px;letter-spacing:-0.207px;left:57.90px;color:#1c1c1c;">Добрая волшебница</span></div><div class="brow" style="top:629px"><b style="background:#5df2bb"></b><svg style="left:25px;top:7px" width="8" height="9" viewBox="0 0 8 9" ><path d="M0 0 L8 4.5 L0 9 Z" fill="#7c7c7c"/></svg><svg style="left:37px;top:5px" width="15" height="13" viewBox="0 0 15 13" ><path d="M0.5 2.2 Q0.5 0.6 2 0.6 H5.4 Q6.3 0.6 6.8 1.5 L7.2 2.3 H13 Q14.5 2.3 14.5 3.8 V11 Q14.5 12.5 13 12.5 H2 Q0.5 12.5 0.5 11 Z" fill="#a9dbf7" stroke="#6f7d8a" stroke-width="0.9"/><path d="M0.9 3.9 H14.1" stroke="#7f93a3" stroke-width="0.7"/></svg><span class="abs" style="white-space:nowrap;top:0.00px;font-size:13px;line-height:23px;letter-spacing:-0.183px;left:57.90px;color:#1c1c1c;">Расходимся?</span></div><div class="brow" style="top:652px"><b style="background:#e99658"></b><svg style="left:25px;top:7px" width="8" height="9" viewBox="0 0 8 9" ><path d="M0 0 L8 4.5 L0 9 Z" fill="#7c7c7c"/></svg><svg style="left:37px;top:5px" width="15" height="13" viewBox="0 0 15 13" ><path d="M0.5 2.2 Q0.5 0.6 2 0.6 H5.4 Q6.3 0.6 6.8 1.5 L7.2 2.3 H13 Q14.5 2.3 14.5 3.8 V11 Q14.5 12.5 13 12.5 H2 Q0.5 12.5 0.5 11 Z" fill="#a9dbf7" stroke="#6f7d8a" stroke-width="0.9"/><path d="M0.9 3.9 H14.1" stroke="#7f93a3" stroke-width="0.7"/></svg><span class="abs" style="white-space:nowrap;top:0.00px;font-size:13px;line-height:23px;letter-spacing:0.13px;left:57.90px;color:#1c1c1c;">Данженкроулинг</span></div><div class="brow" style="top:675px"><b style="background:#e99658"></b><svg style="left:24px;top:8px" width="9" height="8" viewBox="0 0 9 8" ><path d="M0 0 L9 0 L4.5 8 Z" fill="#6f6f6f"/></svg><svg style="left:37px;top:5px" width="15" height="13" viewBox="0 0 15 13" ><path d="M0.5 2.2 Q0.5 0.6 2 0.6 H5.4 Q6.3 0.6 6.8 1.5 L7.2 2.3 H13 Q14.5 2.3 14.5 3.8 V11 Q14.5 12.5 13 12.5 H2 Q0.5 12.5 0.5 11 Z" fill="#a9dbf7" stroke="#6f7d8a" stroke-width="0.9"/><path d="M0.9 3.9 H14.1" stroke="#7f93a3" stroke-width="0.7"/></svg><span class="abs" style="white-space:nowrap;top:0.00px;font-size:13px;line-height:23px;letter-spacing:-0.076px;left:57.90px;color:#1c1c1c;">Взрывной рост</span></div><div class="brow" style="top:698px"><b style="background:#e99658"></b><svg style="left:54.5px;top:4.5px" width="11" height="14" viewBox="0 0 11 14" ><rect x="0.5" y="0.5" width="10" height="13" fill="#fff" stroke="#8e8e8e" stroke-width="0.9"/><path d="M2.5 3.5 H8.5 M2.5 5.5 H8.5 M2.5 7.5 H8.5 M2.5 9.5 H8.5" stroke="#b3b3b3" stroke-width="0.8"/></svg><span class="abs" style="white-space:nowrap;top:0.00px;font-size:13px;line-height:23px;letter-spacing:-0.247px;left:73.90px;color:#1c1c1c;">Станция старая</span></div><div class="brow" style="top:721px"><b style="background:#e99658"></b><svg style="left:54.5px;top:4.5px" width="11" height="14" viewBox="0 0 11 14" ><path d="M0.5 0.5 H7 L10.5 4 V13.5 H0.5 Z" fill="#fff" stroke="#8e8e8e" stroke-width="0.9"/><path d="M7 0.5 V4 H10.5" fill="none" stroke="#8e8e8e" stroke-width="0.8"/><path d="M2.5 6 H8.5 M2.5 8 H8.5 M2.5 10 H8.5" stroke="#b3b3b3" stroke-width="0.8"/></svg><span class="abs" style="white-space:nowrap;top:0.00px;font-size:13px;line-height:23px;letter-spacing:-0.045px;left:73.90px;color:#1c1c1c;">Враги, прокачка лут</span></div><div class="brow" style="top:744px"><b style="background:#e99658"></b><svg style="left:54.5px;top:4.5px" width="11" height="14" viewBox="0 0 11 14" ><rect x="0.5" y="0.5" width="10" height="13" fill="#fff" stroke="#8e8e8e" stroke-width="0.9"/><path d="M2.5 3.5 H8.5 M2.5 5.5 H8.5 M2.5 7.5 H8.5 M2.5 9.5 H8.5" stroke="#b3b3b3" stroke-width="0.8"/></svg><span class="abs" style="white-space:nowrap;top:0.00px;font-size:13px;line-height:23px;letter-spacing:-0.042px;left:73.90px;color:#1c1c1c;">Побеждает их гранатой</span></div><div class="abs" style="left:0;top:0;width:257px;height:13px;background:#fff"></div><div class="coll" style="top:13px;"><i style="background:#ffd1e5"></i><svg style="left:76.75px;top:7.2px" width="11" height="11" viewBox="0 0 11 11" ><circle cx="4.88" cy="4.88" r="4.18" fill="none" stroke="#727272" stroke-width="1.1"/><path d="M7.8896 7.8896 L10.4 10.4" stroke="#727272" stroke-width="1.1" stroke-linecap="round"/></svg><span class="abs" style="white-space:nowrap;top:4.50px;font-size:13px;line-height:16px;letter-spacing:0.036px;left:92.75px;color:#6a6a6a;">Экипировка</span></div><div class="coll" style="top:40px;"><i style="background:#ffd0e4"></i><svg style="left:96.25px;top:7.2px" width="11" height="11" viewBox="0 0 11 11" ><circle cx="4.88" cy="4.88" r="4.18" fill="none" stroke="#727272" stroke-width="1.1"/><path d="M7.8896 7.8896 L10.4 10.4" stroke="#727272" stroke-width="1.1" stroke-linecap="round"/></svg><span class="abs" style="white-space:nowrap;top:4.50px;font-size:13px;line-height:16px;letter-spacing:-0.133px;left:112.00px;color:#6a6a6a;">Квест</span></div><div class="coll" style="top:67px;"><i style="background:#f0d9fb"></i><svg style="left:75.75px;top:7.2px" width="11" height="11" viewBox="0 0 11 11" ><circle cx="4.88" cy="4.88" r="4.18" fill="none" stroke="#727272" stroke-width="1.1"/><path d="M7.8896 7.8896 L10.4 10.4" stroke="#727272" stroke-width="1.1" stroke-linecap="round"/></svg><span class="abs" style="white-space:nowrap;top:4.50px;font-size:13px;line-height:16px;letter-spacing:0.111px;left:91.25px;color:#6a6a6a;">Достижение</span></div><div class="coll" style="top:94px;"><i style="background:#ffd0e5"></i><svg style="left:88.75px;top:7.2px" width="11" height="11" viewBox="0 0 11 11" ><circle cx="4.88" cy="4.88" r="4.18" fill="none" stroke="#727272" stroke-width="1.1"/><path d="M7.8896 7.8896 L10.4 10.4" stroke="#727272" stroke-width="1.1" stroke-linecap="round"/></svg><span class="abs" style="white-space:nowrap;top:4.50px;font-size:13px;line-height:16px;letter-spacing:-0.006px;left:104.75px;color:#6a6a6a;">Оружие</span></div><div class="coll" style="top:121px;"><i style="background:#dfc1e0"></i><svg style="left:82px;top:7.2px" width="11" height="11" viewBox="0 0 11 11" ><circle cx="4.88" cy="4.88" r="4.18" fill="none" stroke="#727272" stroke-width="1.1"/><path d="M7.8896 7.8896 L10.4 10.4" stroke="#727272" stroke-width="1.1" stroke-linecap="round"/></svg><span class="abs" style="white-space:nowrap;top:4.50px;font-size:13px;line-height:16px;letter-spacing:-0.199px;left:98.00px;color:#6a6a6a;">Предметы</span></div><div class="coll" style="top:148px;"><i style="background:#ffd1c5"></i><svg style="left:90.75px;top:7.2px" width="11" height="11" viewBox="0 0 11 11" ><circle cx="4.88" cy="4.88" r="4.18" fill="none" stroke="#727272" stroke-width="1.1"/><path d="M7.8896 7.8896 L10.4 10.4" stroke="#727272" stroke-width="1.1" stroke-linecap="round"/></svg><span class="abs" style="white-space:nowrap;top:4.50px;font-size:13px;line-height:16px;letter-spacing:0.35px;left:106.75px;color:#6a6a6a;">Игроки</span></div><div class="coll" style="top:175px;"><i style="background:#ffd3c9"></i><svg style="left:100px;top:7.2px" width="11" height="11" viewBox="0 0 11 11" ><circle cx="4.88" cy="4.88" r="4.18" fill="none" stroke="#727272" stroke-width="1.1"/><path d="M7.8896 7.8896 L10.4 10.4" stroke="#727272" stroke-width="1.1" stroke-linecap="round"/></svg><span class="abs" style="white-space:nowrap;top:4.50px;font-size:13px;line-height:16px;letter-spacing:-1.227px;left:116.00px;color:#6a6a6a;">NPC</span></div><div class="coll" style="top:202px;"><i style="background:#cdfbe9"></i><svg style="left:93.75px;top:7.2px" width="11" height="11" viewBox="0 0 11 11" ><circle cx="4.88" cy="4.88" r="4.18" fill="none" stroke="#727272" stroke-width="1.1"/><path d="M7.8896 7.8896 L10.4 10.4" stroke="#727272" stroke-width="1.1" stroke-linecap="round"/></svg><span class="abs" style="white-space:nowrap;top:4.50px;font-size:13px;line-height:16px;letter-spacing:-0.188px;left:109.75px;color:#6a6a6a;">Места</span></div><div class="coll" style="top:229px;"><i style="background:#d7f1c6"></i><svg style="left:93.75px;top:7.2px" width="11" height="11" viewBox="0 0 11 11" ><circle cx="4.88" cy="4.88" r="4.18" fill="none" stroke="#727272" stroke-width="1.1"/><path d="M7.8896 7.8896 L10.4 10.4" stroke="#727272" stroke-width="1.1" stroke-linecap="round"/></svg><span class="abs" style="white-space:nowrap;top:4.50px;font-size:13px;line-height:16px;letter-spacing:-0.266px;left:109.75px;color:#6a6a6a;">Навык</span></div><div class="coll" style="top:256px;"><i style="background:#c5d7dd"></i><svg style="left:72.75px;top:7.2px" width="11" height="11" viewBox="0 0 11 11" ><circle cx="4.88" cy="4.88" r="4.18" fill="none" stroke="#727272" stroke-width="1.1"/><path d="M7.8896 7.8896 L10.4 10.4" stroke="#727272" stroke-width="1.1" stroke-linecap="round"/></svg><span class="abs" style="white-space:nowrap;top:4.50px;font-size:13px;line-height:16px;letter-spacing:-0.014px;left:88.75px;color:#6a6a6a;">Организации</span></div><div class="coll" style="top:283px;"><i style="background:#ceeefc"></i><span class="abs" style="white-space:nowrap;top:4.50px;font-size:13px;line-height:16px;letter-spacing:-0.171px;left:64.75px;color:#6a6a6a;">Инвентарь Леонарма</span></div><div class="coll" style="top:310px;"><i style="background:#f0d7fb"></i><svg style="left:69.75px;top:7.2px" width="11" height="11" viewBox="0 0 11 11" ><circle cx="4.88" cy="4.88" r="4.18" fill="none" stroke="#727272" stroke-width="1.1"/><path d="M7.8896 7.8896 L10.4 10.4" stroke="#727272" stroke-width="1.1" stroke-linecap="round"/></svg><span class="abs" style="white-space:nowrap;top:4.50px;font-size:13px;line-height:16px;letter-spacing:-0.3px;left:85.75px;color:#6a6a6a;">Search Results</span></div><div class="coll" style="top:337px;height:28px;border-bottom:1px solid #c9c9c9;"><i style="background:#f0eff4"></i><span class="abs" style="white-space:nowrap;top:4.50px;font-size:13px;line-height:16px;letter-spacing:-0.484px;left:108.75px;color:#111;font-weight:bold;">Binder</span></div></div>
<div id="edhead"><svg style="left:14.5px;top:8.5px" width="6.5" height="12" viewBox="0 0 6.5 12" ><path d="M6.0 0.5 L0.7 6.0 L6.0 11.5" fill="none" stroke="#4a4a4a" stroke-width="1.15" stroke-linecap="round" stroke-linejoin="round"/></svg><svg style="left:40.5px;top:8.5px" width="6.5" height="12" viewBox="0 0 6.5 12" ><path d="M0.5 0.5 L5.8 6.0 L0.5 11.5" fill="none" stroke="#a2a6ad" stroke-width="1.15" stroke-linecap="round" stroke-linejoin="round"/></svg><svg style="left:62px;top:7px" width="12" height="15" viewBox="0 0 12 15" ><path d="M0.6 0.6 H7.6 L11.4 4.4 V14.4 H0.6 Z" fill="#fff" stroke="#7d7d7d" stroke-width="0.9"/><path d="M7.6 0.6 V4.4 H11.4" fill="none" stroke="#7d7d7d" stroke-width="0.8"/><path d="M2.6 6.4 H9.4 M2.6 8.6 H9.4 M2.6 10.8 H9.4" stroke="#a9a9a9" stroke-width="0.8"/></svg><span class="abs" style="white-space:nowrap;top:7.00px;font-size:12.5px;line-height:16px;letter-spacing:-0.346px;left:82.25px;color:#454545;font-style:italic;">В пути мне встретилось несколько зебро-либератов. Но их не удалось...</span><svg style="left:509.29999999999995px;top:11.599999999999994px" width="9.6" height="5.6" viewBox="0 0 9.6 5.6" ><path d="M0.5 5.1 L4.8 0.5 L9.1 5.1" fill="none" stroke="#4a4a4a" stroke-width="1.2" stroke-linecap="round" stroke-linejoin="round"/></svg><svg style="left:528.3px;top:12px" width="9.6" height="5.6" viewBox="0 0 9.6 5.6" ><path d="M0.5 0.5 L4.8 5.1 L9.1 0.5" fill="none" stroke="#4a4a4a" stroke-width="1.2" stroke-linecap="round" stroke-linejoin="round"/></svg><svg style="left:552.3px;top:10.599999999999994px" width="10.6" height="8.8" viewBox="0 0 10.6 8.8" ><rect x="0.6" y="0.6" width="9.4" height="7.6" fill="none" stroke="#3a3a3a" stroke-width="1.1"/><path d="M0.6 1.3 H10" stroke="#3a3a3a" stroke-width="1.6"/></svg></div>
<div id="editor"><div class="ln in l" style="top:8.50px;font-weight:bold;letter-spacing:0.519px;">Прочность: 72/100.</div><div class="ln in" style="top:52.50px;">Положил второй и повторил операцию. Индикатор</div><div class="ln" style="top:74.50px;">снова заполнился зелёным, но на середине застыл, резко</div><i class="abs" style="left:60.3px;top:96px;width:452.5px;height:22px;background:#fdf9e6;border:1px solid #dbd7bd"></i><div class="ln" style="top:96.50px;">покраснел и замигал. Коробка открылась, выплёвывая</div><div class="ln l" style="top:118.50px;letter-spacing:0.319px;">револьвер:</div><div class="ln in" style="top:162.50px;font-weight:bold;">Неудачная попытка восстановления оружия. Стало</div><div class="ln l" style="top:184.50px;font-weight:bold;letter-spacing:0.461px;">хуже, чем было, прости.</div><div class="ln in l" style="top:228.50px;font-weight:bold;letter-spacing:0.519px;">Прочность: 34/100.</div><div class="ln in l" style="top:272.50px;font-weight:bold;letter-spacing:0.194px;">Изучен навык «<span style="color:#2674d6;text-decoration:underline;text-decoration-thickness:1px;text-underline-offset:2px">Срочный ремонт</span>»: +10 XP.</div><div class="ln in" style="top:294.50px;font-weight:bold;">Бывает так много врагов, что даже оружие устаёт их</div><div class="ln l" style="top:316.50px;font-weight:bold;letter-spacing:0.282px;">расстреливать. Тогда ему нужна твоя забота.</div><div class="ln in" style="top:360.50px;">Блин, а если вторая попытка будет неудачной? Я же</div><div class="ln" style="top:382.50px;">потеряю револьвер. Если положу в ремонт первый ствол, то</div><div class="ln" style="top:404.50px;">при неудаче верну его к прежнему уровню прочности. Если</div><div class="ln l" style="top:426.50px;letter-spacing:0.372px;">не хуже.</div><div class="ln in" style="top:448.50px;">Моя <span style="border-bottom:2px dotted #5cba5c;display:inline-block;line-height:15.5px">удача</span> снова слишком низкая для изменившегося</div><div class="ln" style="top:470.50px;">уровня. Была не была — сунул второй револьвер в ремонт.</div><div class="ln" style="top:492.50px;">Сломается — и хер с ним. Не без напряжения я следил, как</div><div class="ln" style="top:514.50px;letter-spacing:1.95px;">заполнялся индикатор. Ближе к концу он слегка</div><div class="ln" style="top:536.50px;">приостановился, словно испытывая нервы, но благополучно</div><div class="ln l" style="top:558.50px;letter-spacing:0.395px;">завершил ремонт:</div><div class="ln in l" style="top:602.50px;letter-spacing:0.386px;">Прочность: 46/100.</div></div>
<div id="outl"><div class="orow" style="top:63.6px;"><svg style="left:23px;top:3.5px" width="15" height="15" viewBox="0 0 15 15" ><path d="M6.2 0.6 H8.8 L9.3 3.2 H5.7 Z" transform="rotate(0 7.5 7.5)" fill="#f3f3f3" stroke="#a9a9a9" stroke-width="0.75" stroke-linejoin="round"/><path d="M6.2 0.6 H8.8 L9.3 3.2 H5.7 Z" transform="rotate(45 7.5 7.5)" fill="#f3f3f3" stroke="#a9a9a9" stroke-width="0.75" stroke-linejoin="round"/><path d="M6.2 0.6 H8.8 L9.3 3.2 H5.7 Z" transform="rotate(90 7.5 7.5)" fill="#f3f3f3" stroke="#a9a9a9" stroke-width="0.75" stroke-linejoin="round"/><path d="M6.2 0.6 H8.8 L9.3 3.2 H5.7 Z" transform="rotate(135 7.5 7.5)" fill="#f3f3f3" stroke="#a9a9a9" stroke-width="0.75" stroke-linejoin="round"/><path d="M6.2 0.6 H8.8 L9.3 3.2 H5.7 Z" transform="rotate(180 7.5 7.5)" fill="#f3f3f3" stroke="#a9a9a9" stroke-width="0.75" stroke-linejoin="round"/><path d="M6.2 0.6 H8.8 L9.3 3.2 H5.7 Z" transform="rotate(225 7.5 7.5)" fill="#f3f3f3" stroke="#a9a9a9" stroke-width="0.75" stroke-linejoin="round"/><path d="M6.2 0.6 H8.8 L9.3 3.2 H5.7 Z" transform="rotate(270 7.5 7.5)" fill="#f3f3f3" stroke="#a9a9a9" stroke-width="0.75" stroke-linejoin="round"/><path d="M6.2 0.6 H8.8 L9.3 3.2 H5.7 Z" transform="rotate(315 7.5 7.5)" fill="#f3f3f3" stroke="#a9a9a9" stroke-width="0.75" stroke-linejoin="round"/><circle cx="7.5" cy="7.5" r="4.7" fill="#f3f3f3" stroke="#ababab" stroke-width="0.75"/><circle cx="7.5" cy="7.5" r="4.1" fill="#f4f4f4"/><circle cx="7.5" cy="7.5" r="2" fill="#fff" stroke="#acacac" stroke-width="0.8"/></svg><span class="abs" style="white-space:nowrap;top:-0.10px;font-size:13px;line-height:24px;letter-spacing:-0.103px;left:43.90px;color:#1a1a1a;">Иерихонская труба</span></div><div class="orow" style="top:87.6px;"><svg style="left:23px;top:3px" width="15" height="15" viewBox="0 0 15 15" ><path d="M7.5 0.9 L9.35 5.5 L14.3 5.85 L10.5 9.05 L11.7 13.9 L7.5 11.25 L3.3 13.9 L4.5 9.05 L0.7 5.85 L5.65 5.5 Z" fill="#faeba6" stroke="#c9b46a" stroke-width="0.85" stroke-linejoin="round"/></svg><span class="abs" style="white-space:nowrap;top:-0.10px;font-size:13px;line-height:24px;letter-spacing:-0.087px;left:43.90px;color:#1a1a1a;">Из последних сил</span></div><div class="orow" style="top:111.6px;"><svg style="left:23px;top:3.5px" width="15" height="15" viewBox="0 0 15 15" ><path d="M6.2 0.6 H8.8 L9.3 3.2 H5.7 Z" transform="rotate(0 7.5 7.5)" fill="#f3f3f3" stroke="#a9a9a9" stroke-width="0.75" stroke-linejoin="round"/><path d="M6.2 0.6 H8.8 L9.3 3.2 H5.7 Z" transform="rotate(45 7.5 7.5)" fill="#f3f3f3" stroke="#a9a9a9" stroke-width="0.75" stroke-linejoin="round"/><path d="M6.2 0.6 H8.8 L9.3 3.2 H5.7 Z" transform="rotate(90 7.5 7.5)" fill="#f3f3f3" stroke="#a9a9a9" stroke-width="0.75" stroke-linejoin="round"/><path d="M6.2 0.6 H8.8 L9.3 3.2 H5.7 Z" transform="rotate(135 7.5 7.5)" fill="#f3f3f3" stroke="#a9a9a9" stroke-width="0.75" stroke-linejoin="round"/><path d="M6.2 0.6 H8.8 L9.3 3.2 H5.7 Z" transform="rotate(180 7.5 7.5)" fill="#f3f3f3" stroke="#a9a9a9" stroke-width="0.75" stroke-linejoin="round"/><path d="M6.2 0.6 H8.8 L9.3 3.2 H5.7 Z" transform="rotate(225 7.5 7.5)" fill="#f3f3f3" stroke="#a9a9a9" stroke-width="0.75" stroke-linejoin="round"/><path d="M6.2 0.6 H8.8 L9.3 3.2 H5.7 Z" transform="rotate(270 7.5 7.5)" fill="#f3f3f3" stroke="#a9a9a9" stroke-width="0.75" stroke-linejoin="round"/><path d="M6.2 0.6 H8.8 L9.3 3.2 H5.7 Z" transform="rotate(315 7.5 7.5)" fill="#f3f3f3" stroke="#a9a9a9" stroke-width="0.75" stroke-linejoin="round"/><circle cx="7.5" cy="7.5" r="4.7" fill="#f3f3f3" stroke="#ababab" stroke-width="0.75"/><circle cx="7.5" cy="7.5" r="4.1" fill="#f4f4f4"/><circle cx="7.5" cy="7.5" r="2" fill="#fff" stroke="#acacac" stroke-width="0.8"/></svg><span class="abs" style="white-space:nowrap;top:-0.10px;font-size:13px;line-height:24px;letter-spacing:0.083px;left:43.90px;color:#1a1a1a;">моток проволоки</span></div><div class="orow" style="top:135.6px;"><svg style="left:22px;top:3.5px" width="15" height="15" viewBox="0 0 15 15" ><path d="M14.6 0.4 L13.9 3.6 L6.4 10.6 L4.6 8.8 L11.6 1.3 Z" fill="#111"/><path d="M2.8 7.4 L7.8 12.4" stroke="#111" stroke-width="1.4" stroke-linecap="round"/><path d="M4.6 10.4 L0.9 14.1" stroke="#111" stroke-width="1.8" stroke-linecap="round"/></svg><span class="abs" style="white-space:nowrap;top:-0.10px;font-size:13px;line-height:24px;letter-spacing:0.077px;left:43.90px;color:#1a1a1a;">растяжка</span></div><div class="orow" style="top:159.6px;"><svg style="left:23px;top:3px" width="15" height="15" viewBox="0 0 15 15" ><path d="M7.5 0.9 L9.35 5.5 L14.3 5.85 L10.5 9.05 L11.7 13.9 L7.5 11.25 L3.3 13.9 L4.5 9.05 L0.7 5.85 L5.65 5.5 Z" fill="#faeba6" stroke="#c9b46a" stroke-width="0.85" stroke-linejoin="round"/></svg><span class="abs" style="white-space:nowrap;top:-0.10px;font-size:13px;line-height:24px;letter-spacing:-0.2px;left:43.90px;color:#1a1a1a;">Изменяющих реальность</span></div><div class="orow" style="top:183.6px;"><svg style="left:24.5px;top:3.5px" width="12" height="15" viewBox="0 0 12 15" ><rect x="0.5" y="0.5" width="11" height="14" fill="#fff" stroke="#a2a2a2" stroke-width="0.8"/><rect x="1.8" y="1.8" width="8.4" height="5.8" fill="#4fb260"/><path d="M3.6 1.8 L6 4.6 L8.4 1.8 Z" fill="#8fd3f2"/><path d="M2.2 9.4 H9.8 M2.2 11.2 H9.8 M2.2 13 H7.6" stroke="#c6c6c6" stroke-width="0.8"/></svg><span class="abs" style="white-space:nowrap;top:-0.10px;font-size:13px;line-height:24px;letter-spacing:0.149px;left:43.90px;color:#1a1a1a;">Измерение-Икс</span></div><div class="orow" style="top:207.6px;"><svg style="left:24.5px;top:3.5px" width="12" height="15" viewBox="0 0 12 15" ><rect x="0.5" y="0.5" width="11" height="14" fill="#fff" stroke="#a2a2a2" stroke-width="0.8"/><rect x="2.6" y="1.8" width="6.8" height="5.6" fill="#f8dcb6"/><circle cx="6" cy="3.9" r="1.25" fill="#a87848"/><path d="M3.6 7.4 Q3.6 5.5 6 5.5 Q8.4 5.5 8.4 7.4 Z" fill="#a87848"/><path d="M2.2 9.2 H9.8 M2.2 11 H9.8 M2.2 12.8 H9.8" stroke="#c2c2c2" stroke-width="0.8"/></svg><span class="abs" style="white-space:nowrap;top:-0.10px;font-size:13px;line-height:24px;letter-spacing:-0.081px;left:43.90px;color:#1a1a1a;">Имамура Натсу</span></div><div class="orow" style="top:231.6px;"><svg style="left:23px;top:3.5px" width="15" height="15" viewBox="0 0 15 15" ><circle cx="7.5" cy="7.5" r="6.7" fill="#f9c28a" stroke="#c98e4c" stroke-width="0.9"/><path d="M5.4 5.9 Q5.4 3.9 7.5 3.9 Q9.6 3.9 9.6 5.7 Q9.6 6.8 8.4 7.5 Q7.5 8 7.5 9" fill="none" stroke="#a8661c" stroke-width="1.4" stroke-linecap="round"/><circle cx="7.5" cy="11.2" r="0.9" fill="#a8661c"/></svg><span class="abs" style="white-space:nowrap;top:-0.10px;font-size:13px;line-height:24px;letter-spacing:-0.226px;left:43.90px;color:#1a1a1a;">Инвалид</span></div><div class="orow" style="top:255.6px;"><svg style="left:23px;top:3px" width="15" height="15" viewBox="0 0 15 15" ><path d="M7.5 0.9 L9.35 5.5 L14.3 5.85 L10.5 9.05 L11.7 13.9 L7.5 11.25 L3.3 13.9 L4.5 9.05 L0.7 5.85 L5.65 5.5 Z" fill="#faeba6" stroke="#c9b46a" stroke-width="0.85" stroke-linejoin="round"/></svg><span class="abs" style="white-space:nowrap;top:-0.10px;font-size:13px;line-height:24px;letter-spacing:0.118px;left:43.90px;color:#1a1a1a;">Инженер</span></div><div class="orow" style="top:279.6px;"><svg style="left:23px;top:3.5px" width="15" height="15" viewBox="0 0 15 15" ><path d="M6.2 0.6 H8.8 L9.3 3.2 H5.7 Z" transform="rotate(0 7.5 7.5)" fill="#f3f3f3" stroke="#a9a9a9" stroke-width="0.75" stroke-linejoin="round"/><path d="M6.2 0.6 H8.8 L9.3 3.2 H5.7 Z" transform="rotate(45 7.5 7.5)" fill="#f3f3f3" stroke="#a9a9a9" stroke-width="0.75" stroke-linejoin="round"/><path d="M6.2 0.6 H8.8 L9.3 3.2 H5.7 Z" transform="rotate(90 7.5 7.5)" fill="#f3f3f3" stroke="#a9a9a9" stroke-width="0.75" stroke-linejoin="round"/><path d="M6.2 0.6 H8.8 L9.3 3.2 H5.7 Z" transform="rotate(135 7.5 7.5)" fill="#f3f3f3" stroke="#a9a9a9" stroke-width="0.75" stroke-linejoin="round"/><path d="M6.2 0.6 H8.8 L9.3 3.2 H5.7 Z" transform="rotate(180 7.5 7.5)" fill="#f3f3f3" stroke="#a9a9a9" stroke-width="0.75" stroke-linejoin="round"/><path d="M6.2 0.6 H8.8 L9.3 3.2 H5.7 Z" transform="rotate(225 7.5 7.5)" fill="#f3f3f3" stroke="#a9a9a9" stroke-width="0.75" stroke-linejoin="round"/><path d="M6.2 0.6 H8.8 L9.3 3.2 H5.7 Z" transform="rotate(270 7.5 7.5)" fill="#f3f3f3" stroke="#a9a9a9" stroke-width="0.75" stroke-linejoin="round"/><path d="M6.2 0.6 H8.8 L9.3 3.2 H5.7 Z" transform="rotate(315 7.5 7.5)" fill="#f3f3f3" stroke="#a9a9a9" stroke-width="0.75" stroke-linejoin="round"/><circle cx="7.5" cy="7.5" r="4.7" fill="#f3f3f3" stroke="#ababab" stroke-width="0.75"/><circle cx="7.5" cy="7.5" r="4.1" fill="#f4f4f4"/><circle cx="7.5" cy="7.5" r="2" fill="#fff" stroke="#acacac" stroke-width="0.8"/></svg><span class="abs" style="white-space:nowrap;top:-0.10px;font-size:13px;line-height:24px;letter-spacing:-0.347px;left:43.90px;color:#1a1a1a;">Интерфейс Адам Онлайн, наст…</span></div><div class="orow" style="top:303.6px;"><svg style="left:23px;top:3.5px" width="15" height="15" viewBox="0 0 15 15" ><path d="M6.2 0.6 H8.8 L9.3 3.2 H5.7 Z" transform="rotate(0 7.5 7.5)" fill="#f3f3f3" stroke="#a9a9a9" stroke-width="0.75" stroke-linejoin="round"/><path d="M6.2 0.6 H8.8 L9.3 3.2 H5.7 Z" transform="rotate(45 7.5 7.5)" fill="#f3f3f3" stroke="#a9a9a9" stroke-width="0.75" stroke-linejoin="round"/><path d="M6.2 0.6 H8.8 L9.3 3.2 H5.7 Z" transform="rotate(90 7.5 7.5)" fill="#f3f3f3" stroke="#a9a9a9" stroke-width="0.75" stroke-linejoin="round"/><path d="M6.2 0.6 H8.8 L9.3 3.2 H5.7 Z" transform="rotate(135 7.5 7.5)" fill="#f3f3f3" stroke="#a9a9a9" stroke-width="0.75" stroke-linejoin="round"/><path d="M6.2 0.6 H8.8 L9.3 3.2 H5.7 Z" transform="rotate(180 7.5 7.5)" fill="#f3f3f3" stroke="#a9a9a9" stroke-width="0.75" stroke-linejoin="round"/><path d="M6.2 0.6 H8.8 L9.3 3.2 H5.7 Z" transform="rotate(225 7.5 7.5)" fill="#f3f3f3" stroke="#a9a9a9" stroke-width="0.75" stroke-linejoin="round"/><path d="M6.2 0.6 H8.8 L9.3 3.2 H5.7 Z" transform="rotate(270 7.5 7.5)" fill="#f3f3f3" stroke="#a9a9a9" stroke-width="0.75" stroke-linejoin="round"/><path d="M6.2 0.6 H8.8 L9.3 3.2 H5.7 Z" transform="rotate(315 7.5 7.5)" fill="#f3f3f3" stroke="#a9a9a9" stroke-width="0.75" stroke-linejoin="round"/><circle cx="7.5" cy="7.5" r="4.7" fill="#f3f3f3" stroke="#ababab" stroke-width="0.75"/><circle cx="7.5" cy="7.5" r="4.1" fill="#f4f4f4"/><circle cx="7.5" cy="7.5" r="2" fill="#fff" stroke="#acacac" stroke-width="0.8"/></svg><span class="abs" style="white-space:nowrap;top:-0.10px;font-size:13px;line-height:24px;letter-spacing:-0.172px;left:43.90px;color:#1a1a1a;">Информационная энтропия</span></div><div class="orow" style="top:327.6px;"><svg style="left:24.5px;top:3.5px" width="12" height="15" viewBox="0 0 12 15" ><rect x="0.5" y="0.5" width="11" height="14" fill="#fff" stroke="#a2a2a2" stroke-width="0.8"/><rect x="2.6" y="1.8" width="6.8" height="5.6" fill="#f8dcb6"/><circle cx="6" cy="3.9" r="1.25" fill="#a87848"/><path d="M3.6 7.4 Q3.6 5.5 6 5.5 Q8.4 5.5 8.4 7.4 Z" fill="#a87848"/><path d="M2.2 9.2 H9.8 M2.2 11 H9.8 M2.2 12.8 H9.8" stroke="#c2c2c2" stroke-width="0.8"/></svg><span class="abs" style="white-space:nowrap;top:-0.10px;font-size:13px;line-height:24px;letter-spacing:0.092px;left:43.90px;color:#1a1a1a;">Ирэн Лагган</span></div><div class="orow" style="top:351.6px;"><svg style="left:23px;top:3px" width="15" height="15" viewBox="0 0 15 15" ><path d="M7.5 0.9 L9.35 5.5 L14.3 5.85 L10.5 9.05 L11.7 13.9 L7.5 11.25 L3.3 13.9 L4.5 9.05 L0.7 5.85 L5.65 5.5 Z" fill="#faeba6" stroke="#c9b46a" stroke-width="0.85" stroke-linejoin="round"/></svg><span class="abs" style="white-space:nowrap;top:-0.10px;font-size:13px;line-height:24px;letter-spacing:-0.072px;left:43.90px;color:#1a1a1a;">Исследователь космоса</span></div><div class="orow" style="top:375.6px;"><svg style="left:22.5px;top:3px" width="16" height="16" viewBox="0 0 16 16" ><rect x="1" y="1" width="14" height="7.4" rx="0.8" fill="#fbd3b0" stroke="#c9772f" stroke-width="0.9"/><rect x="3" y="2.6" width="10" height="1.6" fill="#fff"/><rect x="7.3" y="8.4" width="1.4" height="5" fill="#666"/><path d="M4.2 14.6 Q8 12.2 11.8 14.6 Z" fill="#666"/></svg><svg style="left:8px;top:7.5px" width="8" height="9" viewBox="0 0 8 9" ><path d="M0 0 L8 4.5 L0 9 Z" fill="#7c7c7c"/></svg><span class="abs" style="white-space:nowrap;top:-0.10px;font-size:13px;line-height:24px;letter-spacing:-0.12px;left:43.90px;color:#3f74c9;font-weight:bold;">История мира</span></div><div class="orow" style="top:399.6px;"><svg style="left:23px;top:3.5px" width="15" height="15" viewBox="0 0 15 15" ><path d="M6.2 0.6 H8.8 L9.3 3.2 H5.7 Z" transform="rotate(0 7.5 7.5)" fill="#f3f3f3" stroke="#a9a9a9" stroke-width="0.75" stroke-linejoin="round"/><path d="M6.2 0.6 H8.8 L9.3 3.2 H5.7 Z" transform="rotate(45 7.5 7.5)" fill="#f3f3f3" stroke="#a9a9a9" stroke-width="0.75" stroke-linejoin="round"/><path d="M6.2 0.6 H8.8 L9.3 3.2 H5.7 Z" transform="rotate(90 7.5 7.5)" fill="#f3f3f3" stroke="#a9a9a9" stroke-width="0.75" stroke-linejoin="round"/><path d="M6.2 0.6 H8.8 L9.3 3.2 H5.7 Z" transform="rotate(135 7.5 7.5)" fill="#f3f3f3" stroke="#a9a9a9" stroke-width="0.75" stroke-linejoin="round"/><path d="M6.2 0.6 H8.8 L9.3 3.2 H5.7 Z" transform="rotate(180 7.5 7.5)" fill="#f3f3f3" stroke="#a9a9a9" stroke-width="0.75" stroke-linejoin="round"/><path d="M6.2 0.6 H8.8 L9.3 3.2 H5.7 Z" transform="rotate(225 7.5 7.5)" fill="#f3f3f3" stroke="#a9a9a9" stroke-width="0.75" stroke-linejoin="round"/><path d="M6.2 0.6 H8.8 L9.3 3.2 H5.7 Z" transform="rotate(270 7.5 7.5)" fill="#f3f3f3" stroke="#a9a9a9" stroke-width="0.75" stroke-linejoin="round"/><path d="M6.2 0.6 H8.8 L9.3 3.2 H5.7 Z" transform="rotate(315 7.5 7.5)" fill="#f3f3f3" stroke="#a9a9a9" stroke-width="0.75" stroke-linejoin="round"/><circle cx="7.5" cy="7.5" r="4.7" fill="#f3f3f3" stroke="#ababab" stroke-width="0.75"/><circle cx="7.5" cy="7.5" r="4.1" fill="#f4f4f4"/><circle cx="7.5" cy="7.5" r="2" fill="#fff" stroke="#acacac" stroke-width="0.8"/></svg><span class="abs" style="white-space:nowrap;top:-0.10px;font-size:13px;line-height:24px;letter-spacing:-0.025px;left:43.90px;color:#1a1a1a;">камера синтеза</span></div><div class="orow" style="top:423.6px;"><svg style="left:24.5px;top:3.5px" width="12" height="15" viewBox="0 0 12 15" ><rect x="0.5" y="0.5" width="11" height="14" fill="#fff" stroke="#a2a2a2" stroke-width="0.8"/><rect x="1.8" y="1.8" width="8.4" height="5.8" fill="#4fb260"/><path d="M3.6 1.8 L6 4.6 L8.4 1.8 Z" fill="#8fd3f2"/><path d="M2.2 9.4 H9.8 M2.2 11.2 H9.8 M2.2 13 H7.6" stroke="#c6c6c6" stroke-width="0.8"/></svg><span class="abs" style="white-space:nowrap;top:-0.10px;font-size:13px;line-height:24px;letter-spacing:0.077px;left:43.90px;color:#1a1a1a;">Капитул-Дистрикт</span></div><div class="orow" style="top:447.6px;"><svg style="left:23px;top:3.5px" width="15" height="15" viewBox="0 0 15 15" ><path d="M6.2 0.6 H8.8 L9.3 3.2 H5.7 Z" transform="rotate(0 7.5 7.5)" fill="#f3f3f3" stroke="#a9a9a9" stroke-width="0.75" stroke-linejoin="round"/><path d="M6.2 0.6 H8.8 L9.3 3.2 H5.7 Z" transform="rotate(45 7.5 7.5)" fill="#f3f3f3" stroke="#a9a9a9" stroke-width="0.75" stroke-linejoin="round"/><path d="M6.2 0.6 H8.8 L9.3 3.2 H5.7 Z" transform="rotate(90 7.5 7.5)" fill="#f3f3f3" stroke="#a9a9a9" stroke-width="0.75" stroke-linejoin="round"/><path d="M6.2 0.6 H8.8 L9.3 3.2 H5.7 Z" transform="rotate(135 7.5 7.5)" fill="#f3f3f3" stroke="#a9a9a9" stroke-width="0.75" stroke-linejoin="round"/><path d="M6.2 0.6 H8.8 L9.3 3.2 H5.7 Z" transform="rotate(180 7.5 7.5)" fill="#f3f3f3" stroke="#a9a9a9" stroke-width="0.75" stroke-linejoin="round"/><path d="M6.2 0.6 H8.8 L9.3 3.2 H5.7 Z" transform="rotate(225 7.5 7.5)" fill="#f3f3f3" stroke="#a9a9a9" stroke-width="0.75" stroke-linejoin="round"/><path d="M6.2 0.6 H8.8 L9.3 3.2 H5.7 Z" transform="rotate(270 7.5 7.5)" fill="#f3f3f3" stroke="#a9a9a9" stroke-width="0.75" stroke-linejoin="round"/><path d="M6.2 0.6 H8.8 L9.3 3.2 H5.7 Z" transform="rotate(315 7.5 7.5)" fill="#f3f3f3" stroke="#a9a9a9" stroke-width="0.75" stroke-linejoin="round"/><circle cx="7.5" cy="7.5" r="4.7" fill="#f3f3f3" stroke="#ababab" stroke-width="0.75"/><circle cx="7.5" cy="7.5" r="4.1" fill="#f4f4f4"/><circle cx="7.5" cy="7.5" r="2" fill="#fff" stroke="#acacac" stroke-width="0.8"/></svg><span class="abs" style="white-space:nowrap;top:-0.10px;font-size:13px;line-height:24px;letter-spacing:-0.074px;left:43.90px;color:#1a1a1a;">Квалиа, компонент</span></div><div class="orow" style="top:471.6px;"><svg style="left:24.5px;top:3.5px" width="12" height="15" viewBox="0 0 12 15" ><rect x="0.5" y="0.5" width="11" height="14" fill="#fff" stroke="#a2a2a2" stroke-width="0.8"/><rect x="2.6" y="1.8" width="6.8" height="5.6" fill="#f8dcb6"/><circle cx="6" cy="3.9" r="1.25" fill="#a87848"/><path d="M3.6 7.4 Q3.6 5.5 6 5.5 Q8.4 5.5 8.4 7.4 Z" fill="#a87848"/><path d="M2.2 9.2 H9.8 M2.2 11 H9.8 M2.2 12.8 H9.8" stroke="#c2c2c2" stroke-width="0.8"/></svg><span class="abs" style="white-space:nowrap;top:-0.10px;font-size:13px;line-height:24px;letter-spacing:-0.01px;left:43.90px;color:#1a1a1a;">Кемпер</span></div><div class="orow" style="top:495.6px;"><svg style="left:23px;top:3px" width="15" height="15" viewBox="0 0 15 15" ><path d="M7.5 0.9 L9.35 5.5 L14.3 5.85 L10.5 9.05 L11.7 13.9 L7.5 11.25 L3.3 13.9 L4.5 9.05 L0.7 5.85 L5.65 5.5 Z" fill="#faeba6" stroke="#c9b46a" stroke-width="0.85" stroke-linejoin="round"/></svg><span class="abs" style="white-space:nowrap;top:-0.10px;font-size:13px;line-height:24px;letter-spacing:0.18px;left:43.90px;color:#1a1a1a;">киберклерк</span></div><div class="orow" style="top:519.6px;"><svg style="left:24px;top:3px" width="14" height="16" viewBox="0 0 14 16" ><path d="M1.6 1 V15.4" stroke="#7a7a7a" stroke-width="1.3" stroke-linecap="round"/><path d="M2.4 2 Q5 0.6 7.6 2 T13.2 2 V9 Q10.4 10.4 7.6 9 T2.4 9 Z" fill="#b4dcf6" stroke="#6fa3c8" stroke-width="0.8"/></svg><span class="abs" style="white-space:nowrap;top:-0.10px;font-size:13px;line-height:24px;letter-spacing:-0.111px;left:43.90px;color:#1a1a1a;">Клиника доктора Сэда</span><span class="abs" style="white-space:nowrap;top:-1.10px;font-size:13px;line-height:24px;letter-spacing:0.114px;left:251.10px;color:#333;">07/04/2018</span><span class="abs" style="white-space:nowrap;top:-1.10px;font-size:13px;line-height:24px;letter-spacing:-0.014px;left:334.90px;color:#333;background:linear-gradient(#a646c6,#a646c6) 0 18px/100% 1.1px no-repeat;">Организации</span></div><div class="orow" style="top:543.6px;"><svg style="left:23px;top:3.5px" width="15" height="15" viewBox="0 0 15 15" ><path d="M6.2 0.6 H8.8 L9.3 3.2 H5.7 Z" transform="rotate(0 7.5 7.5)" fill="#f3f3f3" stroke="#a9a9a9" stroke-width="0.75" stroke-linejoin="round"/><path d="M6.2 0.6 H8.8 L9.3 3.2 H5.7 Z" transform="rotate(45 7.5 7.5)" fill="#f3f3f3" stroke="#a9a9a9" stroke-width="0.75" stroke-linejoin="round"/><path d="M6.2 0.6 H8.8 L9.3 3.2 H5.7 Z" transform="rotate(90 7.5 7.5)" fill="#f3f3f3" stroke="#a9a9a9" stroke-width="0.75" stroke-linejoin="round"/><path d="M6.2 0.6 H8.8 L9.3 3.2 H5.7 Z" transform="rotate(135 7.5 7.5)" fill="#f3f3f3" stroke="#a9a9a9" stroke-width="0.75" stroke-linejoin="round"/><path d="M6.2 0.6 H8.8 L9.3 3.2 H5.7 Z" transform="rotate(180 7.5 7.5)" fill="#f3f3f3" stroke="#a9a9a9" stroke-width="0.75" stroke-linejoin="round"/><path d="M6.2 0.6 H8.8 L9.3 3.2 H5.7 Z" transform="rotate(225 7.5 7.5)" fill="#f3f3f3" stroke="#a9a9a9" stroke-width="0.75" stroke-linejoin="round"/><path d="M6.2 0.6 H8.8 L9.3 3.2 H5.7 Z" transform="rotate(270 7.5 7.5)" fill="#f3f3f3" stroke="#a9a9a9" stroke-width="0.75" stroke-linejoin="round"/><path d="M6.2 0.6 H8.8 L9.3 3.2 H5.7 Z" transform="rotate(315 7.5 7.5)" fill="#f3f3f3" stroke="#a9a9a9" stroke-width="0.75" stroke-linejoin="round"/><circle cx="7.5" cy="7.5" r="4.7" fill="#f3f3f3" stroke="#ababab" stroke-width="0.75"/><circle cx="7.5" cy="7.5" r="4.1" fill="#f4f4f4"/><circle cx="7.5" cy="7.5" r="2" fill="#fff" stroke="#acacac" stroke-width="0.8"/></svg><span class="abs" style="white-space:nowrap;top:-0.10px;font-size:13px;line-height:24px;letter-spacing:-0.007px;left:43.90px;color:#1a1a1a;">Клоударт, когтемёт</span><span class="abs" style="white-space:nowrap;top:-1.10px;font-size:13px;line-height:24px;letter-spacing:0.114px;left:251.10px;color:#333;">08/05/2018</span><span class="abs" style="white-space:nowrap;top:-1.10px;font-size:13px;line-height:24px;letter-spacing:-1.227px;left:334.90px;color:#333;background:linear-gradient(#8fe88f,#8fe88f) 0 18px/100% 1.1px no-repeat;">NPC</span></div><div class="orow" style="top:567.6px;"><svg style="left:24px;top:3px" width="14" height="16" viewBox="0 0 14 16" ><path d="M1.6 1 V15.4" stroke="#7a7a7a" stroke-width="1.3" stroke-linecap="round"/><path d="M2.4 2 Q5 0.6 7.6 2 T13.2 2 V9 Q10.4 10.4 7.6 9 T2.4 9 Z" fill="#b4dcf6" stroke="#6fa3c8" stroke-width="0.8"/></svg><span class="abs" style="white-space:nowrap;top:-0.10px;font-size:13px;line-height:24px;letter-spacing:-0.263px;left:43.90px;color:#1a1a1a;">Коалиция</span><span class="abs" style="white-space:nowrap;top:-1.10px;font-size:13px;line-height:24px;letter-spacing:0.114px;left:251.10px;color:#333;">13/06/2018</span><span class="abs" style="white-space:nowrap;top:-1.10px;font-size:13px;line-height:24px;letter-spacing:-0.014px;left:334.90px;color:#333;background:linear-gradient(#a646c6,#a646c6) 0 18px/100% 1.1px no-repeat;">Организации</span></div><div class="orow" style="top:591.6px;"><svg style="left:22.5px;top:4px" width="16" height="14" viewBox="0 0 16 14" ><path d="M5 0.5 Q8 2.6 11 0.5 L15.6 3.4 L13.6 7 L12 6 V13.5 H4 V6 L2.4 7 L0.4 3.4 Z" fill="#0a0a0a"/></svg><span class="abs" style="white-space:nowrap;top:-0.10px;font-size:13px;line-height:24px;letter-spacing:-0.219px;left:43.90px;color:#1a1a1a;">Кожаное полупальто Max Payne</span><span class="abs" style="white-space:nowrap;top:-1.10px;font-size:13px;line-height:24px;letter-spacing:0.114px;left:251.10px;color:#333;">25/05/2018</span><span class="abs" style="white-space:nowrap;top:-1.10px;font-size:13px;line-height:24px;letter-spacing:0.036px;left:334.90px;color:#333;background:linear-gradient(#9474f2,#9474f2) 0 18px/100% 1.1px no-repeat;">Экипировка</span></div><div class="orow" style="top:615.6px;"><svg style="left:24.5px;top:3.5px" width="12" height="15" viewBox="0 0 12 15" ><rect x="0.5" y="0.5" width="11" height="14" fill="#fff" stroke="#a2a2a2" stroke-width="0.8"/><rect x="2.6" y="1.8" width="6.8" height="5.6" fill="#f8dcb6"/><circle cx="6" cy="3.9" r="1.25" fill="#a87848"/><path d="M3.6 7.4 Q3.6 5.5 6 5.5 Q8.4 5.5 8.4 7.4 Z" fill="#a87848"/><path d="M2.2 9.2 H9.8 M2.2 11 H9.8 M2.2 12.8 H9.8" stroke="#c2c2c2" stroke-width="0.8"/></svg><span class="abs" style="white-space:nowrap;top:-0.10px;font-size:13px;line-height:24px;letter-spacing:-0.135px;left:43.90px;color:#1a1a1a;">Коллега</span><span class="abs" style="white-space:nowrap;top:-1.10px;font-size:13px;line-height:24px;letter-spacing:0.114px;left:251.10px;color:#333;">01/05/2018</span><span class="abs" style="white-space:nowrap;top:-1.10px;font-size:13px;line-height:24px;letter-spacing:0.34px;left:334.90px;color:#333;background:linear-gradient(#a455d6,#a455d6) 0 18px/100% 1.1px no-repeat;">Игроки</span></div><div class="orow" style="top:639.6px;"><svg style="left:23px;top:3px" width="15" height="15" viewBox="0 0 15 15" ><path d="M7.5 0.9 L9.35 5.5 L14.3 5.85 L10.5 9.05 L11.7 13.9 L7.5 11.25 L3.3 13.9 L4.5 9.05 L0.7 5.85 L5.65 5.5 Z" fill="#faeba6" stroke="#c9b46a" stroke-width="0.85" stroke-linejoin="round"/></svg><span class="abs" style="white-space:nowrap;top:-0.10px;font-size:13px;line-height:24px;letter-spacing:-0.026px;left:43.90px;color:#1a1a1a;">Коллекционер</span><span class="abs" style="white-space:nowrap;top:-1.10px;font-size:13px;line-height:24px;letter-spacing:0.114px;left:251.10px;color:#333;">21/12/2017</span><span class="abs" style="white-space:nowrap;top:-1.10px;font-size:13px;line-height:24px;letter-spacing:-0.141px;left:334.90px;color:#333;background:linear-gradient(#e6ebad,#e6ebad) 0 18px/100% 1.1px no-repeat;">Навык</span></div><div class="orow" style="top:663.6px;"><svg style="left:23px;top:3.5px" width="15" height="15" viewBox="0 0 15 15" ><path d="M6.2 0.6 H8.8 L9.3 3.2 H5.7 Z" transform="rotate(0 7.5 7.5)" fill="#f3f3f3" stroke="#a9a9a9" stroke-width="0.75" stroke-linejoin="round"/><path d="M6.2 0.6 H8.8 L9.3 3.2 H5.7 Z" transform="rotate(45 7.5 7.5)" fill="#f3f3f3" stroke="#a9a9a9" stroke-width="0.75" stroke-linejoin="round"/><path d="M6.2 0.6 H8.8 L9.3 3.2 H5.7 Z" transform="rotate(90 7.5 7.5)" fill="#f3f3f3" stroke="#a9a9a9" stroke-width="0.75" stroke-linejoin="round"/><path d="M6.2 0.6 H8.8 L9.3 3.2 H5.7 Z" transform="rotate(135 7.5 7.5)" fill="#f3f3f3" stroke="#a9a9a9" stroke-width="0.75" stroke-linejoin="round"/><path d="M6.2 0.6 H8.8 L9.3 3.2 H5.7 Z" transform="rotate(180 7.5 7.5)" fill="#f3f3f3" stroke="#a9a9a9" stroke-width="0.75" stroke-linejoin="round"/><path d="M6.2 0.6 H8.8 L9.3 3.2 H5.7 Z" transform="rotate(225 7.5 7.5)" fill="#f3f3f3" stroke="#a9a9a9" stroke-width="0.75" stroke-linejoin="round"/><path d="M6.2 0.6 H8.8 L9.3 3.2 H5.7 Z" transform="rotate(270 7.5 7.5)" fill="#f3f3f3" stroke="#a9a9a9" stroke-width="0.75" stroke-linejoin="round"/><path d="M6.2 0.6 H8.8 L9.3 3.2 H5.7 Z" transform="rotate(315 7.5 7.5)" fill="#f3f3f3" stroke="#a9a9a9" stroke-width="0.75" stroke-linejoin="round"/><circle cx="7.5" cy="7.5" r="4.7" fill="#f3f3f3" stroke="#ababab" stroke-width="0.75"/><circle cx="7.5" cy="7.5" r="4.1" fill="#f4f4f4"/><circle cx="7.5" cy="7.5" r="2" fill="#fff" stroke="#acacac" stroke-width="0.8"/></svg><span class="abs" style="white-space:nowrap;top:-0.10px;font-size:13px;line-height:24px;letter-spacing:-0.059px;left:43.90px;color:#1a1a1a;">Коллекционные редкости</span><span class="abs" style="white-space:nowrap;top:-1.10px;font-size:13px;line-height:24px;letter-spacing:0.114px;left:251.10px;color:#333;">18/12/2017</span><span class="abs" style="white-space:nowrap;top:-1.10px;font-size:13px;line-height:24px;letter-spacing:-0.199px;left:334.90px;color:#333;background:linear-gradient(#3fd862,#3fd862) 0 18px/100% 1.1px no-repeat;">Предметы</span></div><div class="orow" style="top:687.6px;"><svg style="left:23px;top:3px" width="15" height="15" viewBox="0 0 15 15" ><path d="M7.5 0.9 L9.35 5.5 L14.3 5.85 L10.5 9.05 L11.7 13.9 L7.5 11.25 L3.3 13.9 L4.5 9.05 L0.7 5.85 L5.65 5.5 Z" fill="#faeba6" stroke="#c9b46a" stroke-width="0.85" stroke-linejoin="round"/></svg><span class="abs" style="white-space:nowrap;top:-0.10px;font-size:13px;line-height:24px;letter-spacing:-0.01px;left:43.90px;color:#1a1a1a;">Коммуникативность</span><span class="abs" style="white-space:nowrap;top:-1.10px;font-size:13px;line-height:24px;letter-spacing:0.114px;left:251.10px;color:#333;">12/06/2018</span><span class="abs" style="white-space:nowrap;top:-1.10px;font-size:13px;line-height:24px;letter-spacing:-0.141px;left:334.90px;color:#333;background:linear-gradient(#e6ebad,#e6ebad) 0 18px/100% 1.1px no-repeat;">Навык</span></div><div class="orow" style="top:711.6px;"><svg style="left:22.5px;top:4px" width="16" height="14" viewBox="0 0 16 14" ><path d="M5 0.5 Q8 2.6 11 0.5 L15.6 3.4 L13.6 7 L12 6 V13.5 H4 V6 L2.4 7 L0.4 3.4 Z" fill="#0a0a0a"/></svg><span class="abs" style="white-space:nowrap;top:-0.10px;font-size:13px;line-height:24px;letter-spacing:-0.117px;left:43.90px;color:#1a1a1a;">комплект классических наручн…</span><span class="abs" style="white-space:nowrap;top:-1.10px;font-size:13px;line-height:24px;letter-spacing:0.114px;left:251.10px;color:#333;">13/06/2018</span><span class="abs" style="white-space:nowrap;top:-1.10px;font-size:13px;line-height:24px;letter-spacing:0.036px;left:334.90px;color:#333;background:linear-gradient(#9474f2,#9474f2) 0 18px/100% 1.1px no-repeat;">Экипировка</span></div><div class="orow" style="top:735.6px;background:#dcdcdc;border-top:1px solid #c4c4c4;height:24.4px;"><svg style="left:23px;top:3px" width="15" height="15" viewBox="0 0 15 15" ><path d="M7.5 0.9 L9.35 5.5 L14.3 5.85 L10.5 9.05 L11.7 13.9 L7.5 11.25 L3.3 13.9 L4.5 9.05 L0.7 5.85 L5.65 5.5 Z" fill="#faeba6" stroke="#c9b46a" stroke-width="0.85" stroke-linejoin="round"/></svg><span class="abs" style="white-space:nowrap;top:-1.10px;font-size:13px;line-height:24px;letter-spacing:-0.041px;left:43.90px;color:#1a1a1a;">Богоотступник (падший ангел)</span><span class="abs" style="white-space:nowrap;top:-2.10px;font-size:13px;line-height:24px;letter-spacing:0.114px;left:251.10px;color:#333;">05/07/2018</span><span class="abs" style="white-space:nowrap;top:-2.10px;font-size:13px;line-height:24px;letter-spacing:-0.141px;left:334.90px;color:#333;background:linear-gradient(#e6ebad,#e6ebad) 0 18px/100% 1.1px no-repeat;">Навык</span></div><div class="abs" style="left:0;top:0;width:380px;height:30px;background:#f7f7f7;border-bottom:1px solid #a9c9f2"><svg style="left:14.5px;top:8.5px" width="6.5" height="12" viewBox="0 0 6.5 12" ><path d="M6.0 0.5 L0.7 6.0 L6.0 11.5" fill="none" stroke="#4a4a4a" stroke-width="1.15" stroke-linecap="round" stroke-linejoin="round"/></svg><svg style="left:40.5px;top:8.5px" width="6.5" height="12" viewBox="0 0 6.5 12" ><path d="M0.5 0.5 L5.8 6.0 L0.5 11.5" fill="none" stroke="#b5b5b5" stroke-width="1.15" stroke-linecap="round" stroke-linejoin="round"/></svg><svg style="left:61px;top:7.5px" width="15" height="13" viewBox="0 0 15 13" ><rect x="0.5" y="0.5" width="14" height="12" fill="#fff" stroke="#9a9a9a" stroke-width="0.8"/><rect x="2" y="2" width="11" height="9" fill="#f6d7ae"/><circle cx="7.5" cy="5.2" r="2" fill="#9a6a3c"/><path d="M3.6 11 Q3.6 7.8 7.5 7.8 Q11.4 7.8 11.4 11 Z" fill="#9a6a3c"/></svg><span class="abs" style="white-space:nowrap;top:6.50px;font-size:13px;line-height:16px;letter-spacing:-0.137px;left:81.50px;color:#3c3c3c;">Энциклопедия</span></div><div class="abs" style="left:0;top:30px;width:380px;height:26px;background:#f5f5f5;border-bottom:1px solid #c9c9c9"><svg style="left:8px;top:8.300000000000011px" width="8" height="9" viewBox="0 0 8 9" ><path d="M0 0 L8 4.5 L0 9 Z" fill="#7d7d7d"/></svg><div class="abs" style="left:20.4px;top:3.4px;width:352px;height:18.5px;border-radius:4px;background:#fff;border:1px solid #c6c6c6;border-top-color:#bdbdbd"></div><svg style="left:117px;top:7.300000000000011px" width="10.5" height="10.5" viewBox="0 0 10.5 10.5" ><circle cx="4.69" cy="4.69" r="3.99" fill="none" stroke="#7a7a7a" stroke-width="1.1"/><path d="M7.5628 7.5628 L9.9 9.9" stroke="#7a7a7a" stroke-width="1.1" stroke-linecap="round"/></svg><span class="abs" style="white-space:nowrap;top:5.00px;font-size:12px;line-height:16px;letter-spacing:-0.281px;left:133.10px;color:#b4b4b4;">Find</span></div><div class="abs" style="left:0;top:56px;width:380px;height:21px;background:#fbfbfb;border-bottom:1px solid #cdcdcd"><span class="abs" style="white-space:nowrap;top:1.00px;font-size:12px;line-height:16px;letter-spacing:0.191px;left:2.10px;color:#444;">Title</span></div></div>
<div id="insp"><i class="abs" style="left:0;top:524.8px;width:227px;height:22px;background:#fafafa"></i><i class="abs" style="left:0;top:568.8px;width:227px;height:22px;background:#fafafa"></i><i class="abs" style="left:0;top:612.8px;width:227px;height:22px;background:#fafafa"></i><i class="abs" style="left:0;top:656.8px;width:227px;height:22px;background:#fafafa"></i><i class="abs" style="left:0;top:700.8px;width:227px;height:22px;background:#fafafa"></i><i class="abs" style="left:0;top:744.8px;width:227px;height:22px;background:#fafafa"></i><span class="abs" style="white-space:nowrap;top:74.50px;font-size:13px;line-height:16px;left:206.50px;color:#222;">24</span><span class="abs" style="white-space:nowrap;top:93.50px;font-size:13px;line-height:16px;left:206.50px;color:#222;">33</span><i class="abs" style="left:187px;top:116px;width:30px;height:1px;background:#d6d6d6"></i><div class="abs" style="left:191px;top:166.3px;width:26px;height:18px;border-radius:4px;background:linear-gradient(#b4b4b4,#8f8f8f)"><svg style="left:15.5px;top:7px" width="7" height="4" viewBox="0 0 7 4" ><path d="M0.5 0.5 L3.5 3.5 L6.5 0.5" fill="none" stroke="#fff" stroke-width="1.4" stroke-linecap="round" stroke-linejoin="round"/></svg></div><svg style="left:206.5px;top:203px" width="13" height="13" viewBox="0 0 14 14" ><rect x="5.9" y="0" width="2.2" height="3.2" transform="rotate(0 7 7)" fill="#555"/><rect x="5.9" y="0" width="2.2" height="3.2" transform="rotate(45 7 7)" fill="#555"/><rect x="5.9" y="0" width="2.2" height="3.2" transform="rotate(90 7 7)" fill="#555"/><rect x="5.9" y="0" width="2.2" height="3.2" transform="rotate(135 7 7)" fill="#555"/><rect x="5.9" y="0" width="2.2" height="3.2" transform="rotate(180 7 7)" fill="#555"/><rect x="5.9" y="0" width="2.2" height="3.2" transform="rotate(225 7 7)" fill="#555"/><rect x="5.9" y="0" width="2.2" height="3.2" transform="rotate(270 7 7)" fill="#555"/><rect x="5.9" y="0" width="2.2" height="3.2" transform="rotate(315 7 7)" fill="#555"/><circle cx="7" cy="7" r="4.4" fill="#555"/><circle cx="7" cy="7" r="1.9" fill="#fff"/></svg><i class="abs" style="left:0;top:221.5px;width:227px;height:1px;background:#dcdcdc"></i><i class="abs" style="left:0;top:270px;width:227px;height:1px;background:#e6e6e6"></i><div class="abs" style="left:0;top:477px;width:227px;height:26px;background:#f6f6f6;border-top:1px solid #d6d6d6;border-bottom:1px solid #d6d6d6"><svg style="left:196px;top:5.5px" width="13" height="13" viewBox="0 0 14 14" ><rect x="5.9" y="0" width="2.2" height="3.2" transform="rotate(0 7 7)" fill="#555"/><rect x="5.9" y="0" width="2.2" height="3.2" transform="rotate(45 7 7)" fill="#555"/><rect x="5.9" y="0" width="2.2" height="3.2" transform="rotate(90 7 7)" fill="#555"/><rect x="5.9" y="0" width="2.2" height="3.2" transform="rotate(135 7 7)" fill="#555"/><rect x="5.9" y="0" width="2.2" height="3.2" transform="rotate(180 7 7)" fill="#555"/><rect x="5.9" y="0" width="2.2" height="3.2" transform="rotate(225 7 7)" fill="#555"/><rect x="5.9" y="0" width="2.2" height="3.2" transform="rotate(270 7 7)" fill="#555"/><rect x="5.9" y="0" width="2.2" height="3.2" transform="rotate(315 7 7)" fill="#555"/><circle cx="7" cy="7" r="4.4" fill="#555"/><circle cx="7" cy="7" r="1.9" fill="#f6f6f6"/></svg><svg style="left:212.79999999999995px;top:11.5px" width="6.2" height="3.4" viewBox="0 0 6.2 3.4" ><path d="M0.5 0.5 L3.1 2.9 L5.7 0.5" fill="none" stroke="#444" stroke-width="1.2" stroke-linecap="round" stroke-linejoin="round"/></svg></div></div>
<div class="status" style="left:0;width:258px;border-right:1px solid #c3c3c5;border-bottom-left-radius:6px"><svg style="left:13.5px;top:6.5px" width="11.5" height="11.5" viewBox="0 0 11.5 11.5" ><path d="M5.75 0 V11.5 M0 5.75 H11.5" stroke="#3d3d3d" stroke-width="1.1" fill="none"/></svg><svg style="left:44.5px;top:5px" width="15" height="13" viewBox="0 0 15 13" ><path d="M0.6 2.6 V12.4 H14.4 V2.6 H7.4 L6 0.6 H1.6 L0.6 2.6" fill="none" stroke="#444" stroke-width="1" stroke-linejoin="round"/><path d="M7.5 4.8 V10.4 M4.7 7.6 H10.3" stroke="#444" stroke-width="1"/></svg><svg style="left:79px;top:5px" width="13.5" height="13.5" viewBox="0 0 14 14" ><rect x="5.9" y="0" width="2.2" height="3.2" transform="rotate(0 7 7)" fill="#4c4c4c"/><rect x="5.9" y="0" width="2.2" height="3.2" transform="rotate(45 7 7)" fill="#4c4c4c"/><rect x="5.9" y="0" width="2.2" height="3.2" transform="rotate(90 7 7)" fill="#4c4c4c"/><rect x="5.9" y="0" width="2.2" height="3.2" transform="rotate(135 7 7)" fill="#4c4c4c"/><rect x="5.9" y="0" width="2.2" height="3.2" transform="rotate(180 7 7)" fill="#4c4c4c"/><rect x="5.9" y="0" width="2.2" height="3.2" transform="rotate(225 7 7)" fill="#4c4c4c"/><rect x="5.9" y="0" width="2.2" height="3.2" transform="rotate(270 7 7)" fill="#4c4c4c"/><rect x="5.9" y="0" width="2.2" height="3.2" transform="rotate(315 7 7)" fill="#4c4c4c"/><circle cx="7" cy="7" r="4.4" fill="#4c4c4c"/><circle cx="7" cy="7" r="1.9" fill="#f4f3f6"/></svg><svg style="left:95.5px;top:10.5px" width="6.5" height="3.6" viewBox="0 0 6.5 3.6" ><path d="M0.5 0.5 L3.25 3.1 L6.0 0.5" fill="none" stroke="#444" stroke-width="1.2" stroke-linecap="round" stroke-linejoin="round"/></svg></div><div class="status" style="left:258px;width:573px;background:#f6f6f6"><span class="abs" style="white-space:nowrap;top:4.00px;font-size:11.5px;line-height:16px;letter-spacing:-0.474px;left:13.00px;color:#3a3a3a;">125%</span><svg style="left:52.5px;top:10px" width="7" height="4" viewBox="0 0 7 4" ><path d="M0.5 0.5 L3.5 3.5 L6.5 0.5" fill="none" stroke="#444" stroke-width="1.2" stroke-linecap="round" stroke-linejoin="round"/></svg><i class="abs" style="left:66px;top:3px;width:1px;height:18px;background:#d2d2d4"></i><span class="abs" style="white-space:nowrap;top:4.00px;font-size:11.5px;line-height:16px;letter-spacing:0.359px;left:256.25px;color:#333;"><b>2 705</b> chars</span><svg style="left:514.5px;top:5px" width="14" height="14" viewBox="0 0 14 14" ><circle cx="7" cy="7" r="6.3" fill="none" stroke="#555" stroke-width="1"/><circle cx="7" cy="7" r="3.6" fill="none" stroke="#555" stroke-width="1"/><circle cx="7" cy="7" r="1.3" fill="#555"/></svg><svg style="left:544px;top:4.5px" width="15" height="15" viewBox="0 0 15 15" ><path d="M0.6 0.6 H11.4 V10 L7.6 13.6 H0.6 Z" fill="none" stroke="#555" stroke-width="1"/><path d="M11.4 10 H7.6 V13.6" fill="none" stroke="#555" stroke-width="0.9"/><path d="M6.4 8.4 L8.6 11 L14 4.6" fill="none" stroke="#444" stroke-width="1.3" stroke-linecap="round" stroke-linejoin="round"/></svg></div><div class="status" style="left:831px;width:381px;border-left:1px solid #cfcfcf;background:#f6f6f6"><svg style="left:10.5px;top:6.5px" width="11.5" height="11.5" viewBox="0 0 11.5 11.5" ><path d="M5.75 0 V11.5 M0 5.75 H11.5" stroke="#3d3d3d" stroke-width="1.1" fill="none"/></svg><svg style="left:41.5px;top:5px" width="15" height="13" viewBox="0 0 15 13" ><path d="M0.6 2.6 V12.4 H14.4 V2.6 H7.4 L6 0.6 H1.6 L0.6 2.6" fill="none" stroke="#444" stroke-width="1" stroke-linejoin="round"/><path d="M7.5 4.8 V10.4 M4.7 7.6 H10.3" stroke="#444" stroke-width="1"/></svg><svg style="left:70.5px;top:5px" width="13.5" height="13.5" viewBox="0 0 14 14" ><rect x="5.9" y="0" width="2.2" height="3.2" transform="rotate(0 7 7)" fill="#4c4c4c"/><rect x="5.9" y="0" width="2.2" height="3.2" transform="rotate(45 7 7)" fill="#4c4c4c"/><rect x="5.9" y="0" width="2.2" height="3.2" transform="rotate(90 7 7)" fill="#4c4c4c"/><rect x="5.9" y="0" width="2.2" height="3.2" transform="rotate(135 7 7)" fill="#4c4c4c"/><rect x="5.9" y="0" width="2.2" height="3.2" transform="rotate(180 7 7)" fill="#4c4c4c"/><rect x="5.9" y="0" width="2.2" height="3.2" transform="rotate(225 7 7)" fill="#4c4c4c"/><rect x="5.9" y="0" width="2.2" height="3.2" transform="rotate(270 7 7)" fill="#4c4c4c"/><rect x="5.9" y="0" width="2.2" height="3.2" transform="rotate(315 7 7)" fill="#4c4c4c"/><circle cx="7" cy="7" r="4.4" fill="#4c4c4c"/><circle cx="7" cy="7" r="1.9" fill="#f4f3f6"/></svg><svg style="left:87.5px;top:10.5px" width="6.5" height="3.6" viewBox="0 0 6.5 3.6" ><path d="M0.5 0.5 L3.25 3.1 L6.0 0.5" fill="none" stroke="#444" stroke-width="1.2" stroke-linecap="round" stroke-linejoin="round"/></svg><svg style="left:108px;top:6px" width="15" height="11" viewBox="0 0 15 11" ><path d="M4.6 0.6 H0.6 V10.4 H4.6" fill="none" stroke="#555" stroke-width="1"/><path d="M4 5.5 H13.6 M10.4 2.2 L13.8 5.5 L10.4 8.8" fill="none" stroke="#555" stroke-width="1.1" stroke-linejoin="round"/></svg><i class="abs" style="left:131.5px;top:3px;width:1px;height:18px;background:#d2d2d4"></i><span class="abs" style="white-space:nowrap;top:4.00px;font-size:11.5px;line-height:16px;letter-spacing:0.23px;left:140.00px;color:#333;">477 items</span><svg style="left:314.5px;top:7px" width="15" height="10" viewBox="0 0 15 10" ><path d="M0 0.5 H15 M5 3.5 H15 M5 6.5 H15 M0 9.5 H15" stroke="#555" stroke-width="1"/></svg><svg style="left:352px;top:7px" width="16" height="10" viewBox="0 0 16 10" ><circle cx="1.2" cy="1" r="1.1" fill="#555"/><circle cx="1.2" cy="5" r="1.1" fill="#555"/><circle cx="1.2" cy="9" r="1.1" fill="#555"/><path d="M4.6 1 H16 M4.6 5 H16 M4.6 9 H16" stroke="#555" stroke-width="1"/></svg></div><div class="status" style="left:1212px;width:228px;border-left:1px solid #c8c8c8;border-bottom-right-radius:6px;background:#f6f6f6"><span class="abs" style="white-space:nowrap;top:5.00px;font-size:12.5px;line-height:16px;letter-spacing:0.065px;left:30.50px;color:#2c2c2c;">No Label</span><svg style="left:90.5px;top:6.5px" width="7" height="11" viewBox="0 0 7 11" ><path d="M0.8 3.8 L3.5 1 L6.2 3.8 M0.8 7.2 L3.5 10 L6.2 7.2" fill="none" stroke="#3f3f3f" stroke-width="1.15" stroke-linecap="round" stroke-linejoin="round"/></svg><i class="abs" style="left:114.5px;top:3px;width:1px;height:18px;background:#d2d2d4"></i><span class="abs" style="white-space:nowrap;top:5.00px;font-size:12.5px;line-height:16px;letter-spacing:0.264px;left:142.50px;color:#2c2c2c;">No Status</span><svg style="left:207px;top:6.5px" width="7" height="11" viewBox="0 0 7 11" ><path d="M0.8 3.8 L3.5 1 L6.2 3.8 M0.8 7.2 L3.5 10 L6.2 7.2" fill="none" stroke="#3f3f3f" stroke-width="1.15" stroke-linecap="round" stroke-linejoin="round"/></svg></div>
</div>
<div id="siri"><i class="abs" style="left:10px;top:8px;width:12px;height:12px;border-radius:6px;background:#676767"></i><svg style="left:13px;top:11px" width="6" height="6" viewBox="0 0 6 6" ><path d="M0.2 0.2 L5.8 5.8 M5.8 0.2 L0.2 5.8" stroke="#a3a3a3" stroke-width="0.85"/></svg><span class="abs" style="white-space:nowrap;top:30.00px;font-size:12.5px;line-height:16px;letter-spacing:-0.053px;left:199.00px;color:#fff;">« Виды револьверов »</span><span class="abs" style="white-space:nowrap;top:60.00px;font-size:12.5px;line-height:16px;letter-spacing:0.054px;left:11.80px;color:#fff;font-weight:bold;">Мне жаль, Максим, но я не могу</span><span class="abs" style="white-space:nowrap;top:76.00px;font-size:12.5px;line-height:16px;letter-spacing:-0.18px;left:11.80px;color:#fff;font-weight:bold;">выполнять такие действия.</span><span class="abs" style="white-space:nowrap;top:105.00px;font-size:12.5px;line-height:16px;letter-spacing:0.037px;left:263.50px;color:#fff;">« Почему »</span><span class="abs" style="white-space:nowrap;top:135.00px;font-size:12.5px;line-height:16px;letter-spacing:-0.15px;left:11.80px;color:#fff;font-weight:bold;">Замечательный вопрос.</span><span class="abs" style="white-space:nowrap;top:164.00px;font-size:12.5px;line-height:16px;letter-spacing:0.021px;left:114.00px;color:#fff;">« Какие виды <span style="background:linear-gradient(#2b9be2,#2b9be2) 0 100%/100% 1.3px no-repeat;padding-bottom:1.6px">револьверов</span> <span style="background:linear-gradient(#2b9be2,#2b9be2) 0 100%/100% 1.3px no-repeat;padding-bottom:1.6px">бывают</span> »</span><span class="abs" style="white-space:nowrap;top:193.00px;font-size:12.5px;line-height:16px;letter-spacing:-0.068px;left:11.80px;color:#fff;font-weight:bold;">Вот что мне удалось найти в Интернете</span><span class="abs" style="white-space:nowrap;top:209.00px;font-size:12.5px;line-height:16px;letter-spacing:-0.244px;left:11.80px;color:#fff;font-weight:bold;">по запросу «револьверов бывают»:</span><div id="card"><div class="h"></div><svg style="left:8.400000000000091px;top:5.600000000000023px" width="14.8" height="14.8" viewBox="0 0 14.8 14.8" ><defs><linearGradient id="sf" x1="0" y1="0" x2="0" y2="1"><stop offset="0" stop-color="#2fc0fb"/><stop offset="1" stop-color="#1a62e6"/></linearGradient></defs><circle cx="7.4" cy="7.4" r="7.1" fill="#f3f3f3" stroke="#8f8f8f" stroke-width="0.55"/><circle cx="7.4" cy="7.4" r="6" fill="url(#sf)"/><path d="M11.5 3.3 L8.2 8.2 L6.6 6.6 Z" fill="#f4362c"/><path d="M3.3 11.5 L6.6 6.6 L8.2 8.2 Z" fill="#f7f7f7"/></svg><span class="abs" style="white-space:nowrap;top:5.00px;font-size:12.5px;line-height:16px;letter-spacing:0.421px;left:29.00px;color:#454545;">ВЕБ-САЙТЫ</span><svg style="left:297.75px;top:6px" width="14" height="14" viewBox="0 0 14 14" ><circle cx="7" cy="7" r="7" fill="#434343"/><path d="M7 3.2 V10.8 M3.2 7 H10.8" stroke="#f1f1f1" stroke-width="1.7"/></svg><span class="abs" style="white-space:nowrap;top:40.50px;font-size:13px;line-height:16px;letter-spacing:0.226px;left:16.00px;color:#3a3a3a;font-weight:bold;">Револьвер — Википедия</span><span class="abs" style="white-space:nowrap;top:57.00px;font-size:11px;line-height:16px;letter-spacing:0.384px;left:16.00px;color:#7b7b7b;">ru.wikipedia.org</span><i class="s" style="top:82.0px;left:16.5px;width:287.3px"></i><span class="abs" style="white-space:nowrap;top:92.50px;font-size:13px;line-height:16px;letter-spacing:0.247px;left:16.00px;color:#3a3a3a;font-weight:bold;">Список револьверов — Википедия</span><span class="abs" style="white-space:nowrap;top:109.00px;font-size:11px;line-height:16px;letter-spacing:0.384px;left:16.00px;color:#7b7b7b;">ru.wikipedia.org</span><i class="s" style="top:134.0px;left:16.5px;width:287.3px"></i><span class="abs" style="white-space:nowrap;top:144.50px;font-size:13px;line-height:16px;letter-spacing:0.363px;left:16.00px;color:#3a3a3a;font-weight:bold;">Револьвер. Описание и характеристики</span><span class="abs" style="white-space:nowrap;top:160.50px;font-size:13px;line-height:16px;letter-spacing:0.19px;left:16.00px;color:#3a3a3a;font-weight:bold;">револьверов.</span><span class="abs" style="white-space:nowrap;top:176.00px;font-size:11px;line-height:16px;letter-spacing:0.444px;left:16.00px;color:#7b7b7b;">oruzhenosez.ru</span><i class="s" style="top:202.0px;left:16.5px;width:287.3px"></i><span class="abs" style="white-space:nowrap;top:212.50px;font-size:13px;line-height:16px;letter-spacing:0.253px;left:16.00px;color:#3a3a3a;font-weight:bold;">Револьверы мира - капсюльный,</span><span class="abs" style="white-space:nowrap;top:227.50px;font-size:13px;line-height:16px;letter-spacing:0.389px;left:16.00px;color:#3a3a3a;font-weight:bold;">барабанный</span><span class="abs" style="white-space:nowrap;top:244.00px;font-size:11px;line-height:16px;letter-spacing:0.506px;left:16.00px;color:#7b7b7b;">armoury-online.ru</span><i class="s" style="top:270.0px;left:16.5px;width:287.3px"></i><span class="abs" style="white-space:nowrap;top:280.50px;font-size:13px;line-height:16px;letter-spacing:0.377px;left:16.00px;color:#3a3a3a;font-weight:bold;">Револьверы. Оружие. Мировое оружие.</span><span class="abs" style="white-space:nowrap;top:295.50px;font-size:13px;line-height:16px;letter-spacing:0.433px;left:16.00px;color:#3a3a3a;font-weight:bold;">Энциклопедия оружия</span></div><div id="sbot"><i class="abs" style="left:12px;top:29px;width:12px;height:12px;border-radius:6px;background:#5c5c5c"></i><span class="abs" style="white-space:nowrap;top:27.00px;font-size:8.5px;line-height:16px;left:16.00px;color:#787878;font-weight:bold;">?</span><svg style="left:165.5px;top:18.799999999999955px" width="13.2" height="24.6" viewBox="0 0 13.2 24.6" ><rect x="3.4" y="0" width="6.4" height="17.3" rx="3.2" fill="#e3e3e3"/><path d="M1.25 9.2 V13.9 A5.35 5.35 0 0 0 11.95 13.9 V9.2" fill="none" stroke="#e3e3e3" stroke-width="1.5"/><path d="M6.6 19.6 V22.6" stroke="#e3e3e3" stroke-width="1.7"/><rect x="1.9" y="22.2" width="9.4" height="2" fill="#e3e3e3"/></svg></div></div>
</body></html>
